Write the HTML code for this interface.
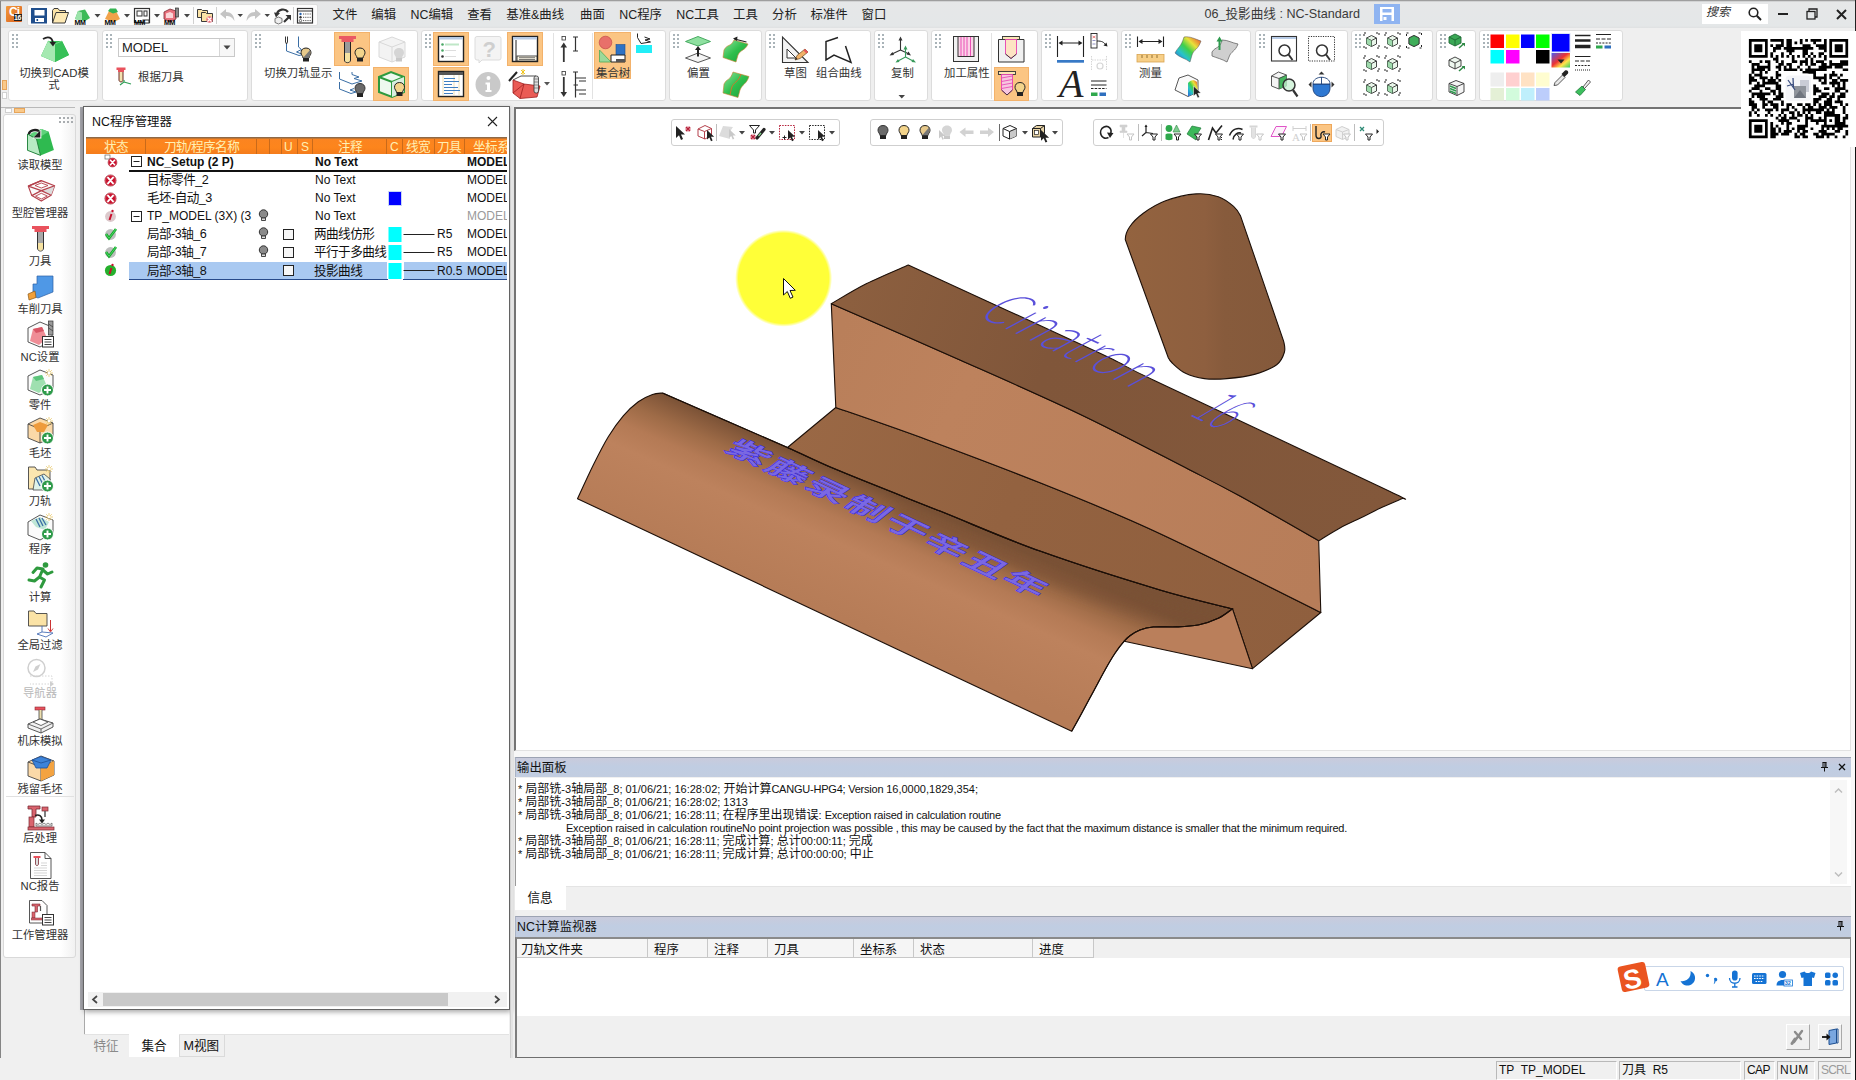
<!DOCTYPE html>
<html lang="zh-CN">
<head>
<meta charset="utf-8">
<title>06_投影曲线 : NC-Standard</title>
<style>
*{box-sizing:border-box;margin:0;padding:0}
html,body{width:1856px;height:1080px;overflow:hidden;background:#f0f0f0}
body{position:relative;font-family:"Liberation Sans","Noto Sans CJK SC",sans-serif;font-size:12px;color:#1e1e1e}
.abs{position:absolute}
.t{position:absolute;white-space:nowrap;line-height:1}
svg{position:absolute;overflow:visible}
/* title bar */
#titlebar{position:absolute;left:0;top:0;width:1856px;height:28px;background:linear-gradient(180deg,#e6e7e8 0,#e4e7e8 92%,#dfe1e2 100%)}
.menu{position:absolute;top:9px;font-size:12.4px;color:#222;white-space:nowrap;line-height:13px}
/* ribbon */
#ribbon{position:absolute;left:0;top:28px;width:1856px;height:76px;background:#efefef}
.grp{position:absolute;top:30px;height:71px;background:#fff;border:1px solid #dcdcdc;border-radius:3px}
.grip{position:absolute;width:8px;height:16px !important;background-image:radial-gradient(circle,#a9b3b8 1px,transparent 1.3px);background-size:4px 4px;margin-left:-1px}
.hl{position:absolute;background:#fbc583;border:1px solid #f3b26b}
.rl{position:absolute;font-size:11.4px;color:#333;white-space:nowrap;line-height:12px;text-align:center}
/* sidebar */
#side{position:absolute;left:3px;top:114px;width:73px;height:844px;background:linear-gradient(90deg,#fff 0,#fff 80%,#f1f1f1 100%);border:1px solid #d9d9d9;border-radius:3px}
.sl{position:absolute;left:0;width:80px;text-align:center;font-size:11.3px;color:#333;line-height:12px;white-space:nowrap}
/* NC manager */
#ncm{overflow:hidden;position:absolute;left:83px;top:106px;width:427px;height:904px;background:#fff;border:1px solid #636363;box-shadow:1px 2px 5px rgba(0,0,0,.35)}
#ncmi{position:absolute;left:2px;top:1px;width:421px;height:901px;overflow:hidden}
.row{position:absolute;left:0;height:18px;font-size:12px;line-height:18px;white-space:nowrap;color:#111}
.c{position:absolute;top:0;white-space:nowrap}
.k{font-size:12.6px;letter-spacing:-.55px}
/* viewport */
#vp{position:absolute;left:514px;top:107px;width:1337px;height:644px;background:#fff;border-top:2px solid #747474;border-left:2px solid #747474;border-right:1px solid #e2e2e2;border-bottom:1px solid #e2e2e2}
.vtb{position:absolute;top:119px;height:27px;background:#fff;border:1px solid #cfcfcf;border-radius:3px}
/* bottom panels */
.phead{position:absolute;left:515px;width:1336px;height:20px;background:linear-gradient(180deg,#c9cbdc 0,#c0cde2 45%,#c2cde0 100%);font-size:12.4px;line-height:20px;color:#111;padding-left:1px}
.out{position:absolute;left:518px;font-size:11px;color:#111;white-space:nowrap;line-height:13px}
.out b{font-weight:normal;font-size:12px}
.out i{font-style:normal;letter-spacing:-.22px}
.th{position:absolute;top:939px;height:19px;border-right:1px solid #c8c8c8;border-bottom:1px solid #c8c8c8;background:#f5f5f5;font-size:12.4px;line-height:22px;padding-left:6px;color:#111;overflow:hidden}
.sb{position:absolute;top:1061px;height:19px;border:1px solid #b9b9b9;border-right-color:#fff;border-bottom-color:#fff;font-size:12px;line-height:17px;color:#111;padding-left:2px;white-space:nowrap}
</style>
</head>
<body>
<!-- ================= TITLE BAR ================= -->
<div id="titlebar">
  <div class="abs" style="left:0;top:0;width:1856px;height:1px;background:#9e9e9e"></div><div class="abs" style="left:0;top:1px;width:1856px;height:1px;background:#d2d3d4"></div>
  <div class="abs" style="left:0;top:1px;width:1px;height:1057px;background:#858585;z-index:5"></div>
  <!-- app icon -->
  <div class="abs" style="left:6px;top:6px;width:16px;height:16px;background:linear-gradient(135deg,#f39a3c,#d9601e);border-radius:1px"></div>
  <div class="t" style="left:9px;top:6px;font-size:12px;font-weight:bold;color:#fff;letter-spacing:-1px">Ci</div>
  <div class="abs" style="left:14px;top:14px;width:8px;height:7px;background:#222"></div>
  <div class="t" style="left:14px;top:14px;font-size:7px;font-weight:bold;color:#fff;letter-spacing:-.5px">16</div>
  <!-- quick access box -->
  <div class="abs" style="left:27px;top:4px;width:291px;height:22px;background:#fdfdfd;border:1px solid #dedede;border-radius:2px"></div>
  <svg style="left:28px;top:4px" width="290" height="22" viewBox="28 4 290 22">
    <!-- save -->
    <rect x="31" y="8" width="16" height="15.5" fill="#1f4e8c"/><rect x="34.5" y="10" width="10" height="5.5" fill="#fff"/><rect x="35" y="18" width="9" height="4" fill="#fff"/><rect x="36.5" y="19" width="1.6" height="2" fill="#1f4e8c"/>
    <!-- folder -->
    <path d="M52.5 23 L52.5 10.5 L54 8.5 L58 8.5 L59.5 10.5 L65.5 10.5 L65.5 12.5" fill="#fbe3a6" stroke="#3a3a3a" stroke-width="1"/>
    <path d="M52.5 23 L56 12.5 L68.5 12.5 L65 23 Z" fill="#fde9b4" stroke="#3a3a3a" stroke-width="1"/>
    <!-- green model MM -->
    <path d="M75 19 L78 11 L85 9.5 L90 18 L85 21 Z" fill="#3dbb58"/><path d="M75 19 L78 11 L82 12.5 L82 21 Z" fill="#9be3aa"/>
    <text x="74.5" y="24.5" font-size="7" font-weight="bold" letter-spacing="-.4" fill="#000" font-family="Liberation Sans,sans-serif">MM</text>
    <path d="M94.5 14 L100.5 14 L97.5 17.5 Z" fill="#444"/>
    <!-- orange/green model -->
    <path d="M105 19 L109 11 L116 11 L120 19 L114 22 Z" fill="#f1a24a"/><path d="M108 11 L110 8.5 L116 8.5 L118 12 L113 13.5 Z" fill="#35b352"/>
    <text x="104.5" y="24.5" font-size="7" font-weight="bold" letter-spacing="-.4" fill="#000" font-family="Liberation Sans,sans-serif">MM</text>
    <path d="M124 14 L130 14 L127 17.5 Z" fill="#444"/>
    <!-- drawing grid -->
    <rect x="134.5" y="8.5" width="15" height="14" fill="#fff" stroke="#333" stroke-width="1.2"/><rect x="137" y="11" width="5" height="5" fill="none" stroke="#333"/><rect x="144" y="11" width="3" height="5" fill="none" stroke="#333"/><rect x="143" y="20" width="6" height="3" fill="#fff" stroke="#333"/>
    <text x="134" y="24.5" font-size="7" font-weight="bold" letter-spacing="-.4" fill="#000" font-family="Liberation Sans,sans-serif">MM</text>
    <path d="M154 14 L160 14 L157 17.5 Z" fill="#444"/>
    <!-- red NC -->
    <path d="M164 19 L164 12 L170 9 L176 11 L176 19 L170 22 Z" fill="#e8707c" stroke="#7a2a33" stroke-width=".8"/><path d="M166 18 L166 13.5 L170 12 L173 13.5 L173 18 Z" fill="#fbd5d8"/><rect x="175.5" y="8" width="3" height="9" fill="#888" stroke="#333" stroke-width=".7"/>
    <text x="164" y="24.5" font-size="7" font-weight="bold" letter-spacing="-.4" fill="#000" font-family="Liberation Sans,sans-serif">MM</text>
    <path d="M184 14 L190 14 L187 17.5 Z" fill="#444"/>
    <line x1="193.5" y1="7" x2="193.5" y2="24" stroke="#d0d0d0"/>
    <!-- folders x -->
    <path d="M197.500 17.500 L197.500 9.500 L201.500 9.500 L202.500 10.500 L207.500 10.500 L207.500 17.500 Z" fill="#fbe3a6" stroke="#3a3a3a"/><path d="M201.500 21.500 L201.500 12.500 L205.500 12.500 L206.500 13.500 L212.500 13.500 L212.500 21.500 Z" fill="#fbe3a6" stroke="#3a3a3a"/><circle cx="209.500" cy="19.500" r="3.200" fill="#e8707c"/><path d="M207.500 17.500 L211.500 21.500 M211.500 17.500 L207.500 21.500" stroke="#fff" stroke-width="1.200"/>
    <line x1="216.500" y1="7" x2="216.500" y2="24" stroke="#d0d0d0"/>
    <!-- undo / redo -->
    <path d="M220 14 L226 9 L226 12 C231 12 234 15 234.500 21 C232 17 230 16 226 16 L226 19 Z" fill="#c4c4c4"/>
    <path d="M237.500 14 L243 14 L240.250 17 Z" fill="#444"/>
    <path d="M261 14 L255 9 L255 12 C250 12 247 15 246.500 21 C249 17 251 16 255 16 L255 19 Z" fill="#c4c4c4"/>
    <path d="M264.500 14 L270 14 L267.250 17 Z" fill="#444"/>
    <!-- refresh -->
    <path d="M277 14 C278 9 285 8 288 12" fill="none" stroke="#333" stroke-width="2.200"/><path d="M274 12.500 L280 13 L276 17.500 Z" fill="#333"/>
    <path d="M284 22 L290 16" stroke="#333" stroke-width="2.200"/><path d="M285.500 15 L291 15 L291 20.500 Z" fill="#333"/>
    <path d="M275 18.500 L278.500 17 L282 18.500 L282 22.500 L278.500 24 L275 22.500 Z" fill="#eee" stroke="#555" stroke-width=".8"/>
    <line x1="293.500" y1="7" x2="293.500" y2="24" stroke="#d0d0d0"/>
    <!-- list -->
    <rect x="297.500" y="8.500" width="15" height="14.500" fill="#fff" stroke="#333" stroke-width="1.200"/><line x1="297.500" y1="11" x2="312.500" y2="11" stroke="#333"/>
    <circle cx="300.500" cy="14" r="1.200" fill="#2a66b0"/><circle cx="300.500" cy="17.300" r="1.200" fill="#333"/><circle cx="300.500" cy="20.600" r="1.200" fill="none" stroke="#333" stroke-width=".7"/>
    <path d="M303 14 H311 M303 17.300 H311 M303 20.600 H311" stroke="#555" stroke-width="1" stroke-dasharray="1.200 1"/>
  </svg>
  <!-- menus -->
  <div class="menu" style="left:332.5px">文件</div>
  <div class="menu" style="left:371.3px">编辑</div>
  <div class="menu" style="left:410.5px">NC编辑</div>
  <div class="menu" style="left:467.2px">查看</div>
  <div class="menu" style="left:506.3px">基准&amp;曲线</div>
  <div class="menu" style="left:580px">曲面</div>
  <div class="menu" style="left:619.3px">NC程序</div>
  <div class="menu" style="left:676.2px">NC工具</div>
  <div class="menu" style="left:733px">工具</div>
  <div class="menu" style="left:772px">分析</div>
  <div class="menu" style="left:810.5px">标准件</div>
  <div class="menu" style="left:861.5px">窗口</div>
  <div class="menu" style="left:1204.5px;top:8px;color:#3a3a3a;font-size:12.6px">06_投影曲线 : NC-Standard</div>
  <!-- blue save -->
  <div class="abs" style="left:1374px;top:4px;width:26px;height:20px;background:#8fb4f1"></div>
  <svg style="left:1380px;top:7px" width="14" height="14" viewBox="0 0 14 14"><path d="M0 0 H14 V14 H0 Z M2.500 2 V5.500 H11.500 V2 Z M2.500 8 V14 H11.500 V8 Z" fill="#fff" fill-rule="evenodd"/><rect x="3.500" y="10" width="3" height="3" fill="#fff"/></svg>
  <!-- search -->
  <div class="abs" style="left:1702px;top:4px;width:66px;height:20px;background:#fff"></div>
  <div class="t" style="left:1706px;top:6px;font-size:12px;font-style:italic;color:#333">搜索</div>
  <svg style="left:1747px;top:6px" width="16" height="16" viewBox="0 0 16 16"><circle cx="6.500" cy="6.500" r="4.300" fill="none" stroke="#222" stroke-width="1.600"/><path d="M9.800 9.800 L14 14" stroke="#222" stroke-width="2"/></svg>
  <!-- window controls -->
  <div class="abs" style="left:1778px;top:13px;width:10px;height:2px;background:#222"></div>
  <svg style="left:1806px;top:8px" width="12" height="12" viewBox="0 0 12 12"><path d="M3 3 V1 H11 V9 H9" fill="none" stroke="#222" stroke-width="1.300"/><rect x="1" y="3.500" width="8" height="7.500" fill="none" stroke="#222" stroke-width="1.300"/></svg>
  <svg style="left:1836px;top:9px" width="11" height="11" viewBox="0 0 11 11"><path d="M1 1 L10 10 M10 1 L1 10" stroke="#222" stroke-width="2"/></svg>
</div>
<!-- ================= RIBBON ================= -->
<div id="ribbon"></div>
<svg width="0" height="0" style="left:0;top:0">
  <defs>
    <linearGradient id="gGreen" x1="0" y1="0" x2="1" y2="1"><stop offset="0" stop-color="#8fe39d"/><stop offset=".5" stop-color="#2fbf4c"/><stop offset="1" stop-color="#1d9a3a"/></linearGradient>
    <linearGradient id="gRain" x1="0" y1="1" x2="1" y2="0"><stop offset="0" stop-color="#2a5bd8"/><stop offset=".3" stop-color="#28c3c9"/><stop offset=".5" stop-color="#3fd04a"/><stop offset=".7" stop-color="#e9e13a"/><stop offset="1" stop-color="#ec3b2e"/></linearGradient>
    <g id="bulbY"><path d="M0 -6 C3.600 -6 5 -3.500 5 -1.200 C5 1 3 2 3 4 L-3 4 C-3 2 -5 1 -5 -1.200 C-5 -3.500 -3.600 -6 0 -6 Z" fill="#f3d48b" stroke="#222" stroke-width="1"/><rect x="-3" y="4" width="6" height="3.500" fill="#222"/></g>
    <g id="bulbD"><path d="M0 -6 C3.600 -6 5 -3.500 5 -1.200 C5 1 3 2 3 4 L-3 4 C-3 2 -5 1 -5 -1.200 C-5 -3.500 -3.600 -6 0 -6 Z" fill="#6a6a6a" stroke="#333" stroke-width="1"/><rect x="-3" y="4" width="6" height="3.500" fill="#222"/></g>
    <g id="bulbH"><path d="M0 -6 C3.600 -6 5 -3.500 5 -1.200 C5 1 3 2 3 4 L-3 4 C-3 2 -5 1 -5 -1.200 C-5 -3.500 -3.600 -6 0 -6 Z" fill="#e7c98b" stroke="#222" stroke-width="1"/><path d="M4 -4 C5.500 -1 3 2 3 4 L-3 4 Z" fill="#777"/><rect x="-3" y="4" width="6" height="3.500" fill="#222"/></g>
    <g id="bulbG"><path d="M0 -6 C3.600 -6 5 -3.500 5 -1.200 C5 1 3 2 3 4 L-3 4 C-3 2 -5 1 -5 -1.200 C-5 -3.500 -3.600 -6 0 -6 Z" fill="#d5d5d5"/><rect x="-3" y="4" width="6" height="3.500" fill="#c8c8c8"/></g>
    <g id="funnel"><path d="M-3.500 0 H3.500 L1 3 V6 H-1 V3 Z" fill="#fff" stroke="#222" stroke-width="1"/></g>
    <g id="funnelG"><path d="M-3.500 0 H3.500 L1 3 V6 H-1 V3 Z" fill="#fff" stroke="#c4c4c4" stroke-width="1"/></g>
  </defs>
</svg>

<!-- group 1 : switch to CAD -->
<div class="grp" style="left:8px;width:90px"></div>
<div class="grip" style="left:12px;top:33px;height:14px"></div>
<svg style="left:36px;top:34px" width="36" height="30" viewBox="36 34 36 30">
  <path d="M41 56 L48 41 L62 41 L69 55 L55 62 Z" fill="#2fba4f"/>
  <path d="M41 56 L48 41 L55 44 L55 62 Z" fill="#a5e9b1"/>
  <path d="M48 41 L62 41 L69 55 L55 62 L55 44 Z" fill="#37c058"/>
  <path d="M48 41 L55 44 L62 41" fill="none" stroke="#7fdc91" stroke-width=".8"/>
  <path d="M43 39 C48 36 52 37 53 43" fill="none" stroke="#222" stroke-width="1.800"/><path d="M49.500 42 L56 42 L53 46.500 Z" fill="#222"/>
</svg>
<div class="rl" style="left:8px;top:67px;width:92px">切换到CAD模<br>式</div>
<!-- tiny left squares -->
<div class="abs" style="left:2px;top:80px;width:5px;height:10px;background:#f9c98a;border:1px solid #e7a55a"></div>
<div class="abs" style="left:2px;top:92px;width:5px;height:7px;background:#fff;border:1px solid #d0d0d0"></div>

<!-- group 2 : MODEL -->
<div class="grp" style="left:102px;width:146px"></div>
<div class="grip" style="left:106px;top:33px;height:14px"></div>
<div class="abs" style="left:118px;top:38px;width:117px;height:19px;background:#fff;border:1px solid #c9c9c9"></div>
<div class="abs" style="left:219px;top:39px;width:1px;height:17px;background:#d6d6d6"></div>
<div class="abs" style="left:220px;top:39px;width:14px;height:17px;background:#f7f7f7"></div>
<svg style="left:223px;top:45px" width="8" height="5" viewBox="0 0 8 5"><path d="M.5 .5 H7.500 L4 4.500 Z" fill="#444"/></svg>
<div class="t" style="left:122px;top:41px;font-size:13px;color:#222">MODEL</div>
<svg style="left:115px;top:67px" width="18" height="18" viewBox="115 67 18 18">
  <rect x="116.500" y="67.500" width="9" height="2.500" fill="#e9525d"/><rect x="118" y="70" width="6" height="2" fill="#e9525d"/>
  <path d="M119 72 V80 C119 82.500 123 82.500 123 80 V72" fill="#f3e2b0" stroke="#6a2b22" stroke-width="1"/>
  <path d="M124 80 L124 82 L120 85 M124 82 L131 84" fill="none" stroke="#2e9e55" stroke-width="1.200"/>
</svg>
<div class="rl" style="left:138px;top:71px">根据刀具</div>

<!-- group 3 : toggle toolpath display -->
<div class="grp" style="left:251px;width:167px"></div>
<div class="grip" style="left:255px;top:33px;height:14px"></div>
<div class="hl" style="left:334px;top:32px;width:36px;height:34px"></div>
<div class="hl" style="left:373px;top:67px;width:36px;height:34px"></div>
<svg style="left:251px;top:30px" width="167" height="71" viewBox="251 30 167 71">
  <!-- toolpath + half bulb -->
  <path d="M285.500 36.500 V42 L286.500 44 L287.500 42 V36.500" fill="none" stroke="#222" stroke-width=".9"/>
  <path d="M286.500 44 V51 L299 55.500 L303 54.500 L296.500 52 L301.500 49.500 L298.500 47 V36.500" fill="none" stroke="#3a6ea5" stroke-width="1"/>
  <use href="#bulbH" x="306" y="54"/>
  <!-- tool w/ bulb (highlighted) -->
  <rect x="339" y="36" width="17" height="3" fill="#ea5963"/><rect x="341.500" y="39" width="12" height="3" fill="#ea5963"/>
  <path d="M344.500 42 V60 C344.500 63.500 350.500 63.500 350.500 60 V42" fill="#9a9a9a" stroke="#222" stroke-width="1"/>
  <path d="M345 53 H350 V60 C350 63 345 63 345 60 Z" fill="#f6e2a1"/>
  <use href="#bulbY" x="360" y="54"/>
  <!-- gray cube w/ bulb -->
  <path d="M379 42 L392 37 L405 42 L405 57 L392 62 L379 57 Z" fill="#f3f3f3" stroke="#d9d9d9" stroke-width="1"/><path d="M379 42 L392 47 L405 42 M392 47 V62" fill="none" stroke="#d9d9d9"/>
  <use href="#bulbG" x="399" y="54"/>
  <!-- toolpath stack + dark bulb -->
  <path d="M339.500 72 V79 L352 84 L362 81 L354 78.500 L359 77 L352 74.500 V72" fill="none" stroke="#3a6ea5" stroke-width="1"/>
  <path d="M339.500 82 V89 L351 93.500 L356 92 L350 90 L354 88.500" fill="none" stroke="#3a6ea5" stroke-width="1"/>
  <use href="#bulbD" x="360" y="89.500"/>
  <!-- green cube w/ bulb (highlighted) -->
  <path d="M379 77 L391 72 L404 77 L404 92 L392 97 L379 92 Z" fill="#eef9ef" stroke="#2e9a3e" stroke-width="2"/><path d="M379 77 L392 82 L404 77 M392 82 V97" fill="none" stroke="#2e9a3e" stroke-width="2"/>
  <path d="M392 82 L404 77 L404 92 L392 97 Z" fill="#d9efe0"/>
  <use href="#bulbY" x="399.500" y="88.500"/>
</svg>
<div class="rl" style="left:264px;top:67px">切换刀轨显示</div>

<!-- group 4 -->
<div class="grp" style="left:421px;width:245px"></div>
<div class="grip" style="left:425px;top:33px;height:14px"></div>
<div class="hl" style="left:433px;top:32px;width:36px;height:34px"></div>
<div class="hl" style="left:433px;top:67px;width:36px;height:34px"></div>
<div class="hl" style="left:507px;top:32px;width:36px;height:34px"></div>
<div class="hl" style="left:594px;top:32px;width:37px;height:47px"></div>
<svg style="left:421px;top:30px" width="245" height="71" viewBox="421 30 245 71">
  <!-- list window -->
  <rect x="438.500" y="36.500" width="25" height="25" fill="#fff" stroke="#222" stroke-width="1.400"/><rect x="439" y="37" width="24" height="2.500" fill="#b7cbe6"/>
  <circle cx="442.500" cy="44.500" r="1.300" fill="#4aa866"/><rect x="445" y="43.500" width="14" height="2" fill="#bfe7c8"/>
  <circle cx="442.500" cy="50.500" r="1.300" fill="#4aa866"/><rect x="445" y="50" width="11" height="1" fill="#ddd"/>
  <circle cx="442.500" cy="56.500" r="1.300" fill="#333"/><rect x="445" y="56" width="11" height="1" fill="#ddd"/>
  <!-- help bubble -->
  <path d="M477 36.500 H499 Q501 36.500 501 38.500 V58 Q501 60 499 60 H482 L479 63 V60 H477 Q475 60 475 58 V38.500 Q475 36.500 477 36.500 Z" fill="#f4f4f4" stroke="#dcdcdc"/>
  <text x="482.500" y="57" font-size="22" font-weight="bold" fill="#cfcfcf" font-family="Liberation Sans,sans-serif">?</text>
  <!-- window layout -->
  <rect x="512.500" y="36.500" width="25" height="25" fill="#fff" stroke="#222" stroke-width="1.400"/><rect x="513" y="37" width="24" height="2.500" fill="#b7cbe6"/><line x1="516" y1="40" x2="516" y2="61" stroke="#222"/><rect x="517" y="56" width="20" height="5" fill="#f7f2e2" stroke="#222" stroke-width=".8"/><path d="M519 57.700 H535 M519 59.500 H535" stroke="#444" stroke-width=".7"/>
  <!-- table -->
  <rect x="438.500" y="71.500" width="25" height="25" fill="#fff" stroke="#222" stroke-width="1.400"/><rect x="439" y="72" width="24" height="3" fill="#555"/>
  <path d="M443 75 V96 M454 75 V96 M459 75 V96" stroke="#ead9a8" stroke-width=".8"/>
  <path d="M444 78.500 H455 M444 81.500 H459 M444 84.500 H452 M444 87.500 H458 M444 90.500 H460 M444 93.500 H453" stroke="#3f7fc1" stroke-width="1"/>
  <!-- info -->
  <circle cx="488" cy="84.500" r="12.500" fill="#c9c9c9"/><circle cx="488.500" cy="78" r="2" fill="#fff"/><path d="M485.500 82.500 H490 V90 H491.500 V92 H485.500 V90 H487 V84.500 H485.500 Z" fill="#fff"/>
  <!-- red NC model -->
  <path d="M513 80 L521 76 L536 76 L536 80" fill="none" stroke="#222" stroke-width=".8"/>
  <path d="M513 80 V93 L520 98.500 L537 97 L540 86 L524 84 Z" fill="#ea5b55" stroke="#a01f1f" stroke-width=".8"/><path d="M524 84 L520 98.500 M513 93 L524 84" stroke="#a01f1f" stroke-width=".8" fill="none"/>
  <path d="M509 81 L517 72" stroke="#222" stroke-width="2"/>
  <path d="M521 70 L525 74 M525 70 L521 74 M523 69 V75" stroke="#f0c520" stroke-width="1"/>
  <rect x="534" y="76" width="4.500" height="17" rx="2" fill="#ddd" stroke="#333" stroke-width=".8"/><path d="M534 79 H538.500 M534 82 H538.500 M534 85 H538.500 M534 88 H538.500" stroke="#555" stroke-width=".6"/>
  <path d="M544 82 H550 L547 85.500 Z" fill="#555"/>
  <line x1="553.500" y1="33" x2="553.500" y2="99" stroke="#e2e2e2"/>
  <!-- arrows up -->
  <rect x="562" y="36.500" width="3.500" height="3.500" fill="#fff" stroke="#333" stroke-width=".8"/><path d="M563.800 62 V46" stroke="#333" stroke-width="1.800"/><path d="M560.500 47.500 L563.800 42.500 L567 47.500 Z" fill="#333"/>
  <path d="M573 37 H578 M573 51 H578 M575.500 37 V51" stroke="#333" stroke-width="1.200"/>
  <!-- arrows down -->
  <rect x="562" y="71.500" width="3.500" height="3.500" fill="#fff" stroke="#333" stroke-width=".8"/><path d="M563.800 77 V93" stroke="#333" stroke-width="1.800"/><path d="M560.500 92 L563.800 97 L567 92 Z" fill="#333"/>
  <path d="M573 72 H578 M575.500 72 V97.500 M575.500 78 H586 M579 81 H586 M573.500 85 H578 M575.500 90 H586 M579 94 H586" stroke="#333" stroke-width="1.200" fill="none"/>
  <line x1="592.500" y1="33" x2="592.500" y2="99" stroke="#e2e2e2"/>
  <!-- set tree -->
  <circle cx="605.500" cy="42.500" r="6.300" fill="#e8706a" stroke="#c24a48" stroke-width=".7"/>
  <rect x="616" y="44.500" width="9" height="11" fill="#2e72c4" stroke="#1d4f91" stroke-width=".6"/>
  <path d="M599.500 50 V62 H611 Z" fill="#9bd99a" stroke="#4faa55" stroke-width=".8"/>
  <path d="M611 55 H625 V62 H611 Z" fill="#fff" stroke="#222" stroke-width="1"/><rect x="616" y="59" width="9" height="3" fill="#555"/>
  <!-- cyan icon -->
  <rect x="636" y="45" width="16" height="8" fill="#22eef7"/><path d="M637.500 33.500 V37.500 L641 43.500 L650.500 42 L645 40 L650 39 L644.500 37" fill="none" stroke="#222" stroke-width="1"/>
</svg>
<div class="rl" style="left:596px;top:67px">集合树</div>
<!-- group 5 : offset -->
<div class="grp" style="left:669px;width:93px"></div>
<div class="grip" style="left:673px;top:33px;height:14px"></div>
<svg style="left:669px;top:30px" width="93" height="71" viewBox="669 30 93 71">
  <path d="M685.500 41.500 L698 36.500 L710.500 41.500 L698 46 Z" fill="#8fe0a0" stroke="#3aa356" stroke-width=".9"/>
  <path d="M685.500 58 L698 53 L710.500 58 L698 62.500 Z" fill="#f4f4f4" stroke="#444" stroke-width=".9"/>
  <path d="M698 56.500 V49" stroke="#222" stroke-width="2"/><path d="M695 50 L698 46 L701 50 Z" fill="#222"/>
  <!-- green surface top -->
  <path d="M724 50 C727 44 731 47 734 40 L748 44 C745 51 741 49 738 55 L736 62 L723 57.500 Z" fill="url(#gGreen)" stroke="#c9832f" stroke-width=".6"/>
  <path d="M734.500 39 L746.500 42" stroke="#222" stroke-width="1.200"/><path d="M733 38.500 L737.500 36.500 L737 41 Z" fill="#222"/>
  <!-- green surface bottom -->
  <path d="M724 84 C727 78 730 81 733 72 L749 76.500 C746 85 743 83 740 90 L738 97.500 L723 93 Z" fill="url(#gGreen)" stroke="#c9832f" stroke-width=".6"/>
  <path d="M741 74 C738 83 734 81 731.500 88 L730 95" fill="none" stroke="#d0762c" stroke-width="1"/>
</svg>
<div class="rl" style="left:687px;top:67px">偏置</div>

<!-- group 6 : sketch -->
<div class="grp" style="left:765px;width:106px"></div>
<div class="grip" style="left:769px;top:33px;height:14px"></div>
<svg style="left:765px;top:30px" width="106" height="71" viewBox="765 30 106 71">
  <path d="M782.500 37 V62.500 H808 Z" fill="#f3f3f3" stroke="#333" stroke-width="1.100"/><path d="M787 49 V58 H796 Z" fill="#fff" stroke="#333" stroke-width="1"/>
  <path d="M795 60 L797 55.500 L805 49 L808 52 L800 58.500 Z" fill="#f1b169" stroke="#6b4a1e" stroke-width=".7"/><path d="M805 49 L808 52 L806.500 53.500 L803.500 50.500 Z" fill="#e9525d"/><path d="M795 60 L796 57.500 L797.500 59 Z" fill="#222"/>
  <path d="M838 37.500 L826 41.500 L826 60 L834 55 L851 62.500 L845.500 46" fill="none" stroke="#222" stroke-width="1.500"/>
</svg>
<div class="rl" style="left:784px;top:67px">草图</div>
<div class="rl" style="left:816px;top:67px">组合曲线</div>

<!-- group 7 : copy -->
<div class="grp" style="left:874px;width:54px"></div>
<div class="grip" style="left:878px;top:33px;height:14px"></div>
<svg style="left:874px;top:30px" width="54" height="71" viewBox="874 30 54 71">
  <path d="M900.500 50 V39 M900.500 50 L891 54.500 M900.500 50 L909 54" stroke="#333" stroke-width="1.100"/><path d="M898.500 40.500 L900.500 36.500 L902.500 40.500 Z M889.500 55.500 L892.500 52 L894 55 Z M911 55.500 L906.500 54.500 L908.500 51.500 Z" fill="#333"/>
  <path d="M905.500 57 V48 M905.500 57 L897 61.500 M905.500 57 L914 61.500" stroke="#3a9a5c" stroke-width="1.100"/><path d="M903.500 49.500 L905.500 45.500 L907.500 49.500 Z M895.500 62.500 L898 59 L899.500 62 Z M916 62.500 L911.500 62 L913 59 Z" fill="#3a9a5c"/>
  <path d="M898.500 95 H905 L901.800 98.500 Z" fill="#444"/>
</svg>
<div class="rl" style="left:891px;top:67px">复制</div>

<!-- group 8 : machining attributes -->
<div class="grp" style="left:931px;width:107px"></div>
<div class="grip" style="left:935px;top:33px;height:14px"></div>
<div class="hl" style="left:994px;top:67px;width:35px;height:34px"></div>
<svg style="left:931px;top:30px" width="107" height="71" viewBox="931 30 107 71">
  <rect x="953.500" y="36.500" width="25" height="25" fill="#f1f1f1" stroke="#333" stroke-width="1"/>
  <rect x="958" y="36.500" width="16" height="20" fill="#fbd3e7" stroke="#333" stroke-width="1"/>
  <path d="M961 37 V56 M964 37 V56 M967 37 V56 M970.500 37 V56" stroke="#e63fb0" stroke-width=".9"/>
  <line x1="991.500" y1="33" x2="991.500" y2="99" stroke="#e2e2e2"/>
  <!-- hole -->
  <path d="M998.500 39.500 H1004 V36.500 H1019 V39.500 H1024 V62 H998.500 Z" fill="#f0f0f0" stroke="#333" stroke-width="1"/>
  <rect x="1002.500" y="36.500" width="17" height="3" fill="#fbe6b6" stroke="#333" stroke-width=".9"/>
  <path d="M1005.500 39.500 V54 L1011 58.500 L1016.500 54 V39.500 Z" fill="#fde3c3" stroke="#e63fb0" stroke-width=".9"/><path d="M1005.500 54 L1011 58.500 L1016.500 54" fill="none" stroke="#333" stroke-width=".9"/>
  <!-- thread + bulb -->
  <rect x="998.500" y="71.500" width="17" height="3" fill="#fbe6b6" stroke="#333" stroke-width=".9"/>
  <path d="M1001.500 74.500 V90 L1007 95 L1012.500 90 V74.500 Z" fill="#f7c6df" stroke="#e63fb0" stroke-width=".9"/>
  <path d="M1001.500 78 L1012.500 76 M1001.500 81.500 L1012.500 79.500 M1001.500 85 L1012.500 83 M1001.500 88.500 L1012.500 86.500" stroke="#e63fb0" stroke-width=".8"/><path d="M1001.500 90 L1007 95 L1012.500 90" fill="none" stroke="#333" stroke-width=".9"/>
  <use href="#bulbY" x="1020" y="88.500"/>
</svg>
<div class="rl" style="left:944px;top:67px">加工属性</div>

<!-- group 9 : dimension -->
<div class="grp" style="left:1041px;width:77px"></div>
<div class="grip" style="left:1045px;top:33px;height:14px"></div>
<svg style="left:1041px;top:30px" width="77" height="71" viewBox="1041 30 77 71">
  <path d="M1057.500 36 V57 M1083.500 36 V57 M1060 43 H1081" stroke="#222" stroke-width="1.100"/><path d="M1058.500 43 L1062.500 40.500 V45.500 Z M1082.500 43 L1078.500 40.500 V45.500 Z" fill="#222"/>
  <rect x="1057" y="60" width="27" height="2.700" fill="#3779c6"/>
  <rect x="1091" y="33.500" width="6" height="14.500" fill="#fff" stroke="#222" stroke-width=".9"/><path d="M1092.500 36 L1095.500 38 M1095.500 36 L1092.500 38" stroke="#d33" stroke-width=".6"/><path d="M1092.500 40.500 H1095.500 M1092.500 44 H1095.500" stroke="#66a" stroke-width=".7"/>
  <path d="M1097 41 C1102 41 1104 42 1106 45.500" fill="none" stroke="#222" stroke-width="1"/><path d="M1107.500 46.500 L1103.500 45.500 L1106.500 42.500 Z" fill="#222"/>
  <path d="M1091.500 56 V71 M1106.500 56 V71 M1092 60 H1106" stroke="#d6d6d6" stroke-width="1" stroke-dasharray="1.500 1"/><circle cx="1100" cy="66" r="3" fill="none" stroke="#d6d6d6" stroke-width="1.200"/>
  <path d="M1091 81 H1106.500" stroke="#222" stroke-width="1"/><path d="M1091 85 H1106.500" stroke="#222" stroke-width="1"/><path d="M1091 88.500 H1106.500" stroke="#222" stroke-width="1" stroke-dasharray="2.500 1.200"/>
  <rect x="1091" y="92.500" width="6.500" height="3.500" fill="#2fa84c"/><rect x="1099.500" y="92.500" width="6.500" height="3.500" fill="#2e6fbe"/>
</svg>
<div class="t" style="left:1059px;top:67px;font-family:'Liberation Serif',serif;font-style:italic;font-size:40px;color:#222;line-height:34px">A</div>

<!-- group 10 : measure -->
<div class="grp" style="left:1121px;width:130px"></div>
<div class="grip" style="left:1125px;top:33px;height:14px"></div>
<svg style="left:1121px;top:30px" width="130" height="71" viewBox="1121 30 130 71">
  <path d="M1137.500 36.500 V47 M1163.500 36.500 V47 M1140 41.500 H1161" stroke="#222" stroke-width="1.100"/><path d="M1138.500 41.500 L1142.500 39 V44 Z M1162.500 41.500 L1158.500 39 V44 Z" fill="#222"/>
  <rect x="1137" y="54.500" width="27" height="7.500" fill="#f7cf87" stroke="#d8a450" stroke-width=".8"/><path d="M1142 55 V58 M1147 55 V58 M1152 55 V58 M1157 55 V58" stroke="#7a5a20" stroke-width=".8"/>
  <path d="M1175 53 C1178 47 1181 47 1184 37 C1190 36 1195 39 1201 41 C1198 50 1194 49 1192 55 L1190 62 C1185 58 1180 58 1175 53 Z" fill="url(#gRain)" stroke="#555" stroke-width=".5"/>
  <path d="M1212 52 C1216 46 1220 49 1222 40 C1228 40 1232 43 1238 44 C1235 52 1231 51 1229 57 L1227 62 C1222 59 1217 58 1212 56 Z" fill="#cfcfcf" stroke="#666" stroke-width=".8"/>
  <path d="M1219.500 50 V40" stroke="#2e9a4e" stroke-width="2"/><path d="M1216.500 41.500 L1219.500 36.500 L1222.500 41.500 Z" fill="#2e9a4e"/>
  <path d="M1175 90 L1179 78 L1188 75 L1198 80 L1198 92 L1188 96.500 Z" fill="#fafafa" stroke="#444" stroke-width=".9"/><path d="M1188 83 L1188 96.500 L1198 92 L1197 82 C1194 79 1190 80 1188 83 Z" fill="url(#gRain)"/>
  <path d="M1193.500 86 V96 L1196 94 L1197.700 98 L1199.500 97 L1197.800 93.300 L1201 93 Z" fill="#222" stroke="#fff" stroke-width=".5"/>
</svg>
<div class="rl" style="left:1139px;top:67px">测量</div>

<!-- group 11 : zoom -->
<div class="grp" style="left:1255px;width:93px"></div>
<div class="grip" style="left:1259px;top:33px;height:14px"></div>
<svg style="left:1255px;top:30px" width="93" height="71" viewBox="1255 30 93 71">
  <rect x="1271.500" y="36.500" width="25" height="24.500" fill="#fff" stroke="#333" stroke-width="1.100"/><rect x="1272" y="37" width="24" height="2" fill="#b7cbe6"/>
  <circle cx="1284.500" cy="50.500" r="5.500" fill="#fff" stroke="#333" stroke-width="1.500"/><path d="M1288.500 54.500 L1292.500 60" stroke="#333" stroke-width="2"/>
  <rect x="1308.500" y="36.500" width="26" height="24.500" fill="#fff" stroke="#333" stroke-width="1" stroke-dasharray="1.200 1.200"/>
  <circle cx="1322" cy="50.500" r="5.500" fill="#fff" stroke="#333" stroke-width="1.500"/><path d="M1326 54.500 L1330 60" stroke="#333" stroke-width="2"/>
  <path d="M1271.500 76 L1278.500 72 L1286.500 75 L1286.500 86 L1279 89 L1271.500 86 Z" fill="#f4f4f4" stroke="#444" stroke-width=".9"/><path d="M1279 78 L1286.500 75 L1286.500 86 L1279 89 Z" fill="#46b55e"/><path d="M1271.500 76 L1279 78.500 L1286.500 75 M1279 78.500 V89" fill="none" stroke="#444" stroke-width=".9"/>
  <circle cx="1289" cy="85" r="6" fill="rgba(200,240,210,.75)" stroke="#333" stroke-width="1.500"/><path d="M1293 90 L1297.500 96.500" stroke="#333" stroke-width="2.200"/>
  <path d="M1313 84 H1330 V88 C1330 99.500 1313 99.500 1313 88 Z" fill="#2e78d2" stroke="#1d3f77" stroke-width=".9"/><path d="M1313 84 C1313 75 1330 75 1330 84 Z" fill="#fff" stroke="#1d3f77" stroke-width=".9"/><path d="M1321.500 77 V84" stroke="#1d3f77" stroke-width=".9"/>
  <path d="M1318.500 74.500 L1321.500 71.500 L1324.500 74.500 Z M1311.500 81.500 L1308.500 84.500 L1311.500 87.500 Z M1331.500 81.500 L1334.500 84.500 L1331.500 87.500 Z" fill="#333"/>
</svg>

<!-- group 12 : views -->
<div class="grp" style="left:1351px;width:82px"></div>
<div class="grip" style="left:1355px;top:33px;height:14px"></div>
<svg style="left:1351px;top:30px" width="82" height="71" viewBox="1351 30 82 71">
  <defs>
    <g id="vcube"><path d="M-7.500 -4.500 V-7.500 H-4.500 M4.500 -7.500 H7.500 V-4.500 M7.500 4.500 V7.500 H4.500 M-4.500 7.500 H-7.500 V4.500" fill="none" stroke="#222" stroke-width="1" stroke-dasharray="2 1"/><path d="M-5 -2.500 L0 -5 L5 -2.500 V3.500 L0 6 L-5 3.500 Z" fill="#e9f6ea" stroke="#333" stroke-width=".9"/><path d="M-5 -2.500 L0 0 L5 -2.500 M0 0 V6" fill="none" stroke="#333" stroke-width=".9"/><path d="M-5 -2.500 L0 0 V6 L-5 3.500 Z" fill="#7fcf92" opacity=".7"/></g>
  </defs>
  <use href="#vcube" x="1371.500" y="40.500"/><use href="#vcube" x="1392.500" y="40.500"/><use href="#vcube" x="1414" y="40.500"/><path d="M1409 38 L1414 35.500 L1419 38 V44 L1414 46.500 L1409 44 Z" fill="#3fae5a" stroke="#333" stroke-width=".8"/>
  <use href="#vcube" x="1371.500" y="63.500"/><use href="#vcube" x="1392.500" y="63.500"/>
  <use href="#vcube" x="1371.500" y="87.500"/><use href="#vcube" x="1392.500" y="87.500"/>
</svg>

<!-- group 13 -->
<div class="grp" style="left:1436px;width:40px"></div>
<div class="grip" style="left:1440px;top:33px;height:14px"></div>
<svg style="left:1436px;top:30px" width="40" height="71" viewBox="1436 30 40 71">
  <path d="M1449 37 L1455 34 L1461 37 V43 L1455 46 L1449 43 Z" fill="#3aa855" stroke="#1f6a35" stroke-width=".9"/><path d="M1449 37 L1455 40 L1461 37 M1455 40 V46" fill="none" stroke="#1f6a35" stroke-width=".9"/><path d="M1459 48 L1464 43.500" stroke="#2e8a45" stroke-width="1.500"/><path d="M1461.500 43 H1465 V46.500 Z" fill="#2e8a45"/>
  <path d="M1449 60 L1455 57 L1461 60 V66 L1455 69 L1449 66 Z" fill="#eef7ef" stroke="#333" stroke-width=".9"/><path d="M1449 60 L1455 63 L1461 60 M1455 63 V69" fill="none" stroke="#333" stroke-width=".9"/><path d="M1459 71 L1464 66.500" stroke="#2e8a45" stroke-width="1.500"/><path d="M1461.500 66 H1465 V69.500 Z" fill="#2e8a45"/>
  <path d="M1449 83.500 L1456 80.500 L1464 83.500 V92 L1457 95.500 L1449 92 Z" fill="#f4f4f4" stroke="#333" stroke-width=".9"/><path d="M1449 83.500 L1457 86.500 L1464 83.500 M1457 86.500 V95.500" fill="none" stroke="#333" stroke-width=".9"/><path d="M1450 86 L1456 88.500 M1450 88.500 L1456 91 M1450 91 L1456 93.500" stroke="#2e9a4e" stroke-width="1.500"/>
</svg>

<!-- group 14 : colours -->
<div class="grp" style="left:1479px;width:144px"></div>
<div class="grip" style="left:1483px;top:33px;height:14px"></div>
<svg style="left:1479px;top:30px" width="144" height="71" viewBox="1479 30 144 71">
  <defs><linearGradient id="gPal" x1="0" y1="0" x2="1" y2="1"><stop offset="0" stop-color="#4a5bf0"/><stop offset=".45" stop-color="#e33"/><stop offset=".7" stop-color="#ffe64a"/><stop offset="1" stop-color="#3c6"/></linearGradient></defs>
  <rect x="1490.500" y="34.500" width="13.500" height="13.500" fill="#ff0000"/><rect x="1506" y="34.500" width="13.500" height="13.500" fill="#ffff00"/><rect x="1521" y="34.500" width="13.500" height="13.500" fill="#0000ff"/><rect x="1536" y="34.500" width="13.500" height="13.500" fill="#00ff00"/>
  <rect x="1490.500" y="50" width="13.500" height="13.500" fill="#00ffff"/><rect x="1506" y="50" width="13.500" height="13.500" fill="#ff00ff"/><rect x="1521" y="50" width="13.500" height="13.500" fill="#ffffff"/><rect x="1536" y="50" width="13.500" height="13.500" fill="#000000"/>
  <rect x="1551.500" y="33.500" width="18.500" height="18.500" fill="#0000ff" stroke="#dbe4f7" stroke-width="1"/>
  <rect x="1551.500" y="53" width="18.500" height="14.500" fill="url(#gPal)"/><path d="M1557.500 59.500 H1564.500 L1561 63.500 Z" fill="#222"/>
  <rect x="1490.500" y="72.500" width="13.500" height="14" fill="#eeeeee"/><rect x="1506" y="72.500" width="13.500" height="14" fill="#ffd0d0"/><rect x="1521" y="72.500" width="13.500" height="14" fill="#ffe2c4"/><rect x="1536" y="72.500" width="13.500" height="14" fill="#fffdd0"/>
  <rect x="1490.500" y="88" width="13.500" height="12.500" fill="#e4f0d6"/><rect x="1506" y="88" width="13.500" height="12.500" fill="#d2fbdc"/><rect x="1521" y="88" width="13.500" height="12.500" fill="#bfeffc"/><rect x="1536" y="88" width="13.500" height="12.500" fill="#bccdfb"/>
  <path d="M1575 35.500 H1590.500" stroke="#222" stroke-width="1.500"/><path d="M1575 40.500 H1590.500" stroke="#222" stroke-width="2.500"/><path d="M1575 46.500 H1590.500" stroke="#222" stroke-width="3.500"/>
  <path d="M1596 34.500 H1611" stroke="#222" stroke-width="1"/><path d="M1596 39 H1611" stroke="#222" stroke-width="1" stroke-dasharray="4 1.500"/><path d="M1596 43 H1611" stroke="#222" stroke-width="1" stroke-dasharray="2 1.200"/><rect x="1596" y="45.500" width="6.500" height="3" fill="#2fa84c"/><rect x="1604.500" y="45.500" width="6.500" height="3" fill="#2e6fbe"/>
  <path d="M1575 56.500 H1590.500" stroke="#222" stroke-width="1"/><path d="M1575 61 H1590.500" stroke="#222" stroke-width="1" stroke-dasharray="4 1.500"/><path d="M1575 65.500 H1590.500" stroke="#222" stroke-width="1" stroke-dasharray="2 1.200"/><path d="M1575 70 H1590.500" stroke="#222" stroke-width="1" stroke-dasharray="1 1"/>
  <path d="M1554 85.500 L1555 82.500 L1562.500 75 L1565 77.500 L1557.500 85 Z" fill="#e8e8e8" stroke="#333" stroke-width=".8"/><path d="M1561.500 74 L1565 70.500 C1567 69.500 1569 71.500 1568 73.500 L1564.500 77 Z" fill="#222"/>
  <path d="M1575.500 92 L1582 86 L1585.500 89.500 L1580 95.500 Z" fill="#3cbf5d" stroke="#1f7a3a" stroke-width=".8"/><path d="M1583 87 L1588.500 80 L1590.500 82 L1584.500 88.500 Z" fill="#f1f1f1" stroke="#333" stroke-width=".8"/>
</svg>
<!-- ================= SIDEBAR ================= -->
<div class="abs" style="left:5px;top:108px;width:7px;height:5px;background:#fff;border:1px solid #d0d0d0"></div>
<div class="abs" style="left:14px;top:108px;width:11px;height:5px;background:#f9c98a;border:1px solid #e7a55a"></div>
<div id="side"></div>
<div class="abs" style="left:58px;top:116px;width:16px;height:8px;background-image:radial-gradient(circle,#a9adb0 1px,transparent 1.300px);background-size:4px 4px"></div>
<div class="abs" style="left:0;top:107px;width:75px;height:1px;background:#b9b9b9"></div>
<div class="abs" style="left:6px;top:796px;width:68px;height:1px;background:#e1e1e1"></div>
<svg style="left:0;top:110px" width="80" height="850" viewBox="0 110 80 850">
  <defs>
    <g id="plus"><circle r="6" fill="#2e9a4a" stroke="#fff" stroke-width="1"/><path d="M-3.500 0 H3.500 M0 -3.500 V3.500" stroke="#fff" stroke-width="1.900"/></g>
    <g id="spark"><path d="M0 -4 V4 M-4 0 H4 M-2.800 -2.800 L2.800 2.800 M-2.800 2.800 L2.800 -2.800" stroke="#e9c86a" stroke-width=".8"/><circle r="1.300" fill="#fff"/></g>
  </defs>
  <!-- 1 读取模型 y=128..156 -->
  <path d="M27.500 134 L41.300 129 L48.700 131.800 L53.900 150 L40.500 155.400 L27.500 150.300 Z" fill="#2fba50"/>
  <path d="M27.500 134 L36.500 139 L40.500 155.400 L27.500 150.300 Z" fill="#b7ebc3"/>
  <path d="M27.500 134 L41.300 129 L48.700 131.800 L36.500 139 Z" fill="#5fd27b"/>
  <path d="M27.500 134 L36.500 139 L40.500 155.400 M27.500 134 V150.300 L40.500 155.400" fill="none" stroke="#1d7d38" stroke-width=".9"/>
  <path d="M28.800 134.200 C29.500 130.200 35 129 39 131" fill="none" stroke="#fff" stroke-width="4"/><path d="M32.300 138.500 H41.300 V129.300 Z" fill="#fff"/>
  <path d="M28.800 134.200 C29.500 130.200 35 129 39 131" fill="none" stroke="#1e1e1e" stroke-width="2.300"/><path d="M33.500 137.500 H40.300 V130.500 Z" fill="#1e1e1e"/>
  <!-- 2 型腔管理器 -->
  <path d="M28.300 186.100 L41.300 180.600 L54.600 185.700 L51.100 195.200 L41.300 201.100 L31.800 195.600 Z" fill="#fafafa" stroke="#b5414c" stroke-width="1.200" stroke-linejoin="round"/>
  <path d="M41.300 190.600 L54.600 185.700 L51.100 195.200 Z" fill="#dcdcdc"/>
  <path d="M28.300 186.100 L41.300 190.600 L54.600 185.700 M31.800 195.600 L41.300 190.600 L51.100 195.200 M28.300 186.100 L41.300 180.600" fill="none" stroke="#b5414c" stroke-width="1.200" stroke-linejoin="round"/>
  <path d="M35 185.500 L41.300 183 L48 185.500 L41.300 188 Z" fill="#fff" stroke="#b5414c" stroke-width=".9"/>
  <path d="M35.500 196.200 L41.300 193.300 L47.300 196 L41.300 199 Z" fill="#fff" stroke="#b5414c" stroke-width=".9"/>
  <!-- 3 刀具 -->
  <rect x="32" y="226" width="17" height="3" fill="#e9525d"/><rect x="34.500" y="229" width="12" height="3" fill="#e9525d"/>
  <path d="M37.500 232 V248 C37.500 252 43.500 252 43.500 248 V232" fill="#a8a8a8" stroke="#333" stroke-width="1"/><path d="M38 243 H43 V248 C43 251.500 38 251.500 38 248 Z" fill="#f6e2a1"/>
  <!-- 4 车削刀具 -->
  <path d="M33 284 H37 V276 H53 V292 L38 298 L33 296 Z" fill="#4f98e6" stroke="#2c5fa3" stroke-width=".7"/><path d="M28 294 L35 291 L36 297.500 L29 300 Z" fill="#f1a03a" stroke="#8a5a1a" stroke-width=".7"/>
  <!-- 5 NC设置 -->
  <path d="M28 328 L40 322 L52 327 V340 L40 347 L28 342 Z" fill="#fbfbfb" stroke="#444" stroke-width=".9"/><path d="M30 341 L33 329 L42 327 L47 338 L39 345 Z" fill="#ef8d96"/><path d="M33 329 L42 327 L44 331 L36 333 Z" fill="#d85565"/>
  <rect x="48.500" y="321" width="4.500" height="14" fill="#9a9a9a" stroke="#333" stroke-width=".7"/><path d="M48.500 324 L53 327 M48.500 328 L53 331" stroke="#333" stroke-width=".7"/>
  <rect x="42.500" y="336.500" width="11" height="10.500" fill="#fff" stroke="#333" stroke-width="1"/><path d="M44.500 339.500 H51.500 M44.500 342 H51.500 M44.500 344.500 H51.500" stroke="#333" stroke-width=".9"/>
  <!-- 6 零件 -->
  <path d="M28 376 L40 370 L53 375 V389 L40 395 L28 390 Z" fill="#fbfbfb" stroke="#444" stroke-width=".9"/><path d="M30 389 L33 377 L42 375 L47 386 L39 393 Z" fill="#9fe0b0"/><path d="M33 377 L42 375 L44 379 L36 381 Z" fill="#5cc47a"/>
  <use href="#spark" x="49" y="373"/><use href="#plus" x="47.500" y="390"/>
  <!-- 7 毛坯 -->
  <path d="M28 424 L40 418 L53 423 V437 L40 443 L28 438 Z" fill="#fbd9a8" stroke="#444" stroke-width=".9"/><path d="M28 424 L40 429 L53 423 M40 429 V443" fill="none" stroke="#444" stroke-width=".9"/><path d="M33 425 L40 422 L48 425 L44 432 L37 432 Z" fill="#ee9b3c"/>
  <use href="#spark" x="49" y="421"/><use href="#plus" x="47.500" y="438"/>
  <!-- 8 刀轨 -->
  <path d="M28.500 489 V467 H35 L37 470 H50 V489 Z" fill="#fbe6b0" stroke="#444" stroke-width=".9"/><path d="M33 490 L35 478 L44 474 L50 479 V490 Z" fill="#dff3ea" stroke="#444" stroke-width=".8"/><path d="M36 478 L40 486 M39 476.500 L43 484.500 M42 475.500 L46 483" stroke="#3a6ea5" stroke-width="1.300"/>
  <use href="#spark" x="49" y="469"/><use href="#plus" x="47.500" y="486"/>
  <!-- 9 程序 -->
  <path d="M28 522 L40 515 L53 520 V533 L40 540 L28 535 Z" fill="#fbfbfb" stroke="#444" stroke-width=".9"/><path d="M31 521 L40 517 L49 522 L45 530 L36 527 Z" fill="#bfe6d6"/><path d="M36 519 L40 527 M39 518 L43 526 M42 518 L46 525" stroke="#3a6ea5" stroke-width="1.300"/>
  <use href="#spark" x="49" y="517"/><use href="#plus" x="47.500" y="534"/>
  <!-- 10 计算 (runner) -->
  <circle cx="45.500" cy="565" r="2.800" fill="#2e9a3e"/>
  <path d="M43 569 L37 568 L33 572.500 M43 569 L39.500 577 L44.500 580 L41 587 M39.500 577 L34.500 581 L29 580 M43.500 570.500 L47.500 574 L52 572" fill="none" stroke="#2e9a3e" stroke-width="3" stroke-linecap="round" stroke-linejoin="round"/>
  <!-- 11 全局过滤 -->
  <path d="M28.500 626 V611 H34 L36 613.500 H47 V626 Z" fill="#fbe3a6" stroke="#444" stroke-width=".9"/><path d="M50.500 620 V631" stroke="#c33" stroke-width="1"/><path d="M48 628.500 L50.500 632 L53 628.500" fill="none" stroke="#c33" stroke-width=".9"/><path d="M42 626 V632 L37 634 L46 637 L53 633 L42 632" fill="none" stroke="#4a6fb5" stroke-width=".9"/>
  <!-- 12 导航器 (gray) -->
  <circle cx="36.500" cy="668" r="8.500" fill="#fff" stroke="#cfcfcf" stroke-width="1.500"/><path d="M33 672 L35.500 666.500 L40.500 664 L38 669.500 Z" fill="#cfcfcf"/><path d="M30 676 H52 V684 H30" fill="none" stroke="#d4d4d4" stroke-width="1" stroke-dasharray="1.500 1.500"/><path d="M50 681 L54 684 L50 687 Z" fill="#cfcfcf"/>
  <!-- 13 机床模拟 -->
  <rect x="35" y="707" width="10" height="3" fill="#e9525d" stroke="#8a2a33" stroke-width=".6"/><path d="M39 710 V720 H42 V710" fill="#eedfae" stroke="#444" stroke-width=".8"/>
  <path d="M28 724 L40 719 L53 723 V727 L41 733 L28 728 Z" fill="#f1f1f1" stroke="#444" stroke-width=".9"/><path d="M33 722 L40 719 L48 722 L41 725.500 Z" fill="#fff" stroke="#444" stroke-width=".8"/><path d="M28 724 L41 729 L53 723 M41 729 V733" fill="none" stroke="#444" stroke-width=".8"/>
  <!-- 14 残留毛坯 -->
  <path d="M28 762 L41 756 L54 761 V775 L41 781 L28 776 Z" fill="#fbd9a8" stroke="#444" stroke-width=".9"/><path d="M28 762 L41 767 L54 761 M41 767 V781" fill="none" stroke="#444" stroke-width=".9"/><path d="M41 767 L54 761 V775 L41 781 Z" fill="#f3a341"/>
  <path d="M32 760 L41 756.500 L51 760 L47 768 L36 768 Z" fill="#3d83d9" stroke="#1e4f95" stroke-width=".8"/><path d="M32 760 L41 763 L51 760" fill="none" stroke="#1e4f95" stroke-width=".8"/>
  <!-- 15 后处理 -->
  <path d="M28 806 H40 V809 H36 V817 H32 V809 H28 Z" fill="#d9646e" stroke="#7a2a33" stroke-width=".8"/><rect x="42" y="807" width="6" height="4" fill="#d9646e" stroke="#7a2a33" stroke-width=".7"/><path d="M45 811 V817" stroke="#555" stroke-width="1.500"/>
  <rect x="29" y="817" width="5" height="10" fill="#d9646e" stroke="#7a2a33" stroke-width=".7"/><rect x="28" y="827" width="26" height="3" fill="#d9646e" stroke="#7a2a33" stroke-width=".7"/><path d="M36 826 H52 V823 L50 824.500 L48 823 L46 824.500 L44 823 L42 824.500 L40 823 L38 824.500 L36 823 Z" fill="#eee" stroke="#444" stroke-width=".6"/>
  <path d="M35 815.500 C39 814 42 816 42 820" fill="none" stroke="#222" stroke-width="1.600"/><path d="M39 819.500 L45 819.500 L42 823.500 Z" fill="#222"/>
  <!-- 16 NC报告 -->
  <path d="M30.500 852.500 H45 L51 858.500 V878.500 H30.500 Z" fill="#fff" stroke="#444" stroke-width=".9"/><path d="M45 852.500 V858.500 H51" fill="none" stroke="#444" stroke-width=".9"/><rect x="33.500" y="856" width="7" height="2" fill="#e9525d"/><path d="M35.500 858 V864 C35.500 866 38.500 866 38.500 864 V858" fill="#ddd" stroke="#7a2a33" stroke-width=".8"/><path d="M34 868 H47 M34 870.500 H47 M34 873 H47 M34 875.500 H47 M41 863 H47 M41 865.500 H47" stroke="#c4c4c4" stroke-width=".7"/>
  <!-- 17 工作管理器 -->
  <path d="M29.500 900.500 H42 L47 905.500 V923 H29.500 Z" fill="#fff" stroke="#444" stroke-width=".9"/><path d="M32 904 H40 V906 H37.500 V912 H35 V906 H32 Z" fill="#d9646e" stroke="#7a2a33" stroke-width=".6"/><rect x="32" y="912" width="3" height="6" fill="#d9646e" stroke="#7a2a33" stroke-width=".5"/><rect x="31.500" y="918" width="12" height="2" fill="#d9646e" stroke="#7a2a33" stroke-width=".5"/><path d="M40.500 906 V911" stroke="#555" stroke-width="1.200"/>
  <rect x="42.500" y="914.500" width="11" height="10.500" fill="#fff" stroke="#333" stroke-width="1"/><path d="M44.500 917.500 H51.500 M44.500 920 H51.500 M44.500 922.500 H51.500" stroke="#333" stroke-width=".9"/>
</svg>
<div class="sl" style="top:159px">读取模型</div>
<div class="sl" style="top:207px">型腔管理器</div>
<div class="sl" style="top:255px">刀具</div>
<div class="sl" style="top:303px">车削刀具</div>
<div class="sl" style="top:351px">NC设置</div>
<div class="sl" style="top:399px">零件</div>
<div class="sl" style="top:447px">毛坯</div>
<div class="sl" style="top:495px">刀轨</div>
<div class="sl" style="top:543px">程序</div>
<div class="sl" style="top:591px">计算</div>
<div class="sl" style="top:639px">全局过滤</div>
<div class="sl" style="top:687px;color:#b9b9b9">导航器</div>
<div class="sl" style="top:735px">机床模拟</div>
<div class="sl" style="top:783px">残留毛坯</div>
<div class="sl" style="top:832px">后处理</div>
<div class="sl" style="top:880px">NC报告</div>
<div class="sl" style="top:929px">工作管理器</div>
<!-- ================= NC PROGRAM MANAGER ================= -->
<!-- area under the floating panel -->
<div class="abs" style="left:84px;top:1009px;width:425px;height:25px;background:#fff;border-left:1px solid #a9a9a9"></div>
<div class="abs" style="left:84px;top:1034px;width:425px;height:1px;background:#e3e3e3"></div>
<div class="abs" style="left:129px;top:1034px;width:50px;height:23px;background:#fff"></div>
<div class="abs" style="left:179px;top:1035px;width:46px;height:22px;border:1px solid #dadada;border-top:none"></div>
<div class="t" style="left:93.5px;top:1040px;font-size:12.6px;color:#8a8a8a">特征</div>
<div class="t" style="left:141.5px;top:1040px;font-size:12.6px;color:#111">集合</div>
<div class="t" style="left:183.5px;top:1040px;font-size:12.6px;color:#111">M视图</div>

<div class="abs" style="left:80px;top:107px;width:3px;height:903px;background:#a4a4aa"></div>
<div id="ncm"><div id="ncmi">
  <div class="t" style="left:6px;top:8px;font-size:12.4px;color:#111">NC程序管理器</div>
  <svg style="left:401px;top:8px" width="11" height="11" viewBox="0 0 11 11"><path d="M1 1 L10 10 M10 1 L1 10" stroke="#222" stroke-width="1.100"/></svg>
  <!-- header -->
  <div class="abs" style="left:0;top:29px;width:421px;height:17px;background:linear-gradient(180deg,#8f6a48 0,#8f6a48 6%,#fb8420 12%,#fd851c 60%,#f47c1c 100%)"></div>
  <div class="abs" style="left:0;top:30px;width:421px;height:16px;font-size:12px;line-height:19px;color:#fff0b4;white-space:nowrap;overflow:hidden">
    <span class="c k" style="left:18px">状态</span><span class="c k" style="left:78px">刀轨/程序名称</span><span class="c" style="left:198px">U</span><span class="c" style="left:215px">S</span><span class="c k" style="left:252px">注释</span><span class="c" style="left:304px">C</span><span class="c k" style="left:320px">线宽</span><span class="c k" style="left:351px">刀具</span><span class="c k" style="left:387px">坐标系</span>
  </div>
  <svg style="left:0;top:31px" width="421" height="15" viewBox="86 0 421 15"><path d="M145.500 0 V15 M256.500 0 V15 M269.500 0 V15 M281.500 0 V15 M297.500 0 V15 M312.500 0 V15 M386.500 0 V15 M402.500 0 V15 M434.500 0 V15 M464.500 0 V15" stroke="#c96a1a" stroke-width="1"/></svg>

  <!-- selected row -->
  <div class="abs" style="left:43px;top:154px;width:378px;height:18px;background:#a9c9f1;border-bottom:1px solid #274a8a"></div>
  <!-- rows (panel origin x=86,y=108) -->
  <div class="row" style="top:45px;font-weight:bold"><span class="c" style="left:61px">NC_Setup (2 P)</span><span class="c" style="left:229px">No Text</span><span class="c" style="left:381px">MODEL</span></div>
  <div class="abs" style="left:43px;top:62px;width:378px;height:2px;background:#111"></div>
  <div class="row" style="top:63px"><span class="c k" style="left:61px">目标零件_2</span><span class="c" style="left:229px">No Text</span><span class="c" style="left:381px">MODEL</span></div>
  <div class="row" style="top:81px"><span class="c k" style="left:61px">毛坯-自动_3</span><span class="c" style="left:229px">No Text</span><span class="c" style="left:381px">MODEL</span></div>
  <div class="row" style="top:99px"><span class="c" style="left:61px">TP_MODEL (3X) (3</span><span class="c" style="left:229px">No Text</span><span class="c" style="left:381px;color:#9a9a9a">MODEL</span></div>
  <div class="row" style="top:117px"><span class="c k" style="left:61px">局部-3轴_6</span><span class="c k" style="left:228px">两曲线仿形</span><span class="c" style="left:351px">R5</span><span class="c" style="left:381px">MODEL</span></div>
  <div class="row" style="top:135px"><span class="c k" style="left:61px">局部-3轴_7</span><span class="c k" style="left:228px">平行于多曲线</span><span class="c" style="left:351px">R5</span><span class="c" style="left:381px">MODEL</span></div>
  <div class="row" style="top:154px"><span class="c k" style="left:61px">局部-3轴_8</span><span class="c k" style="left:228px">投影曲线</span><span class="c" style="left:351px">R0.5</span><span class="c" style="left:381px">MODEL</span></div>
  <div class="abs" style="left:301px;top:135px;width:17px;height:36px;background:#fff"></div>
  <div class="abs" style="left:302px;top:155px;width:15px;height:17px;background:#fff"></div>
  <svg style="left:0;top:0" width="421" height="180" viewBox="86 108 421 180">
    <defs>
      <g id="stX"><circle r="5.600" fill="#c8102e" stroke="#8e0a1f" stroke-width=".6"/><circle r="5" fill="none" stroke="#e88" stroke-width=".5"/><path d="M-2.500 -2.800 L2.500 2.800 M2.500 -2.800 L-2.500 2.800" stroke="#fff" stroke-width="1.900" stroke-linecap="round"/></g>
      <g id="stOK"><circle r="5.400" fill="#bdbdbd"/><path d="M-4.500 -.5 L-1.500 3.800 L5.500 -5.500" fill="none" stroke="#16a52c" stroke-width="2.600"/><path d="M-4.500 -.5 L-1.500 3.800 L5.500 -5.500" fill="none" stroke="#4fe06a" stroke-width=".9"/></g>
      <g id="nbulb"><circle cy="-1.500" r="4.200" fill="#8a8a8a" stroke="#333" stroke-width="1"/><path d="M-2 2.500 H2 V5 H-2 Z" fill="#ddd" stroke="#333" stroke-width=".9"/></g>
      <g id="tbox"><rect x="-5" y="-5" width="10" height="10" fill="#fff" stroke="#222" stroke-width="1"/><path d="M-3 0 H3" stroke="#222" stroke-width="1"/></g>
      <g id="cbox"><rect x="-5" y="-5" width="10" height="10" fill="#f6f6f6" stroke="#222" stroke-width="1"/></g>
    </defs>
    <rect x="105" y="155" width="5" height="4" fill="#fff" stroke="#666" stroke-width=".7"/><use href="#stX" x="112.500" y="162.500" transform="translate(112.500 162.500) scale(.8) translate(-112.500 -162.500)"/>
    <use href="#stX" x="110.500" y="180.500"/>
    <use href="#stX" x="110.500" y="198.500"/>
    <circle cx="110.500" cy="216.500" r="5.400" fill="#dcc9cc"/><path d="M109.500 220 L111.500 214" stroke="#c8102e" stroke-width="2"/><circle cx="112.500" cy="211" r="1.200" fill="#c8102e"/>
    <use href="#stOK" x="110.500" y="234.500"/>
    <use href="#stOK" x="110.500" y="252.500"/>
    <circle cx="110.500" cy="270.500" r="5.600" fill="#25b02c"/><path d="M109.500 274 L111.500 268" stroke="#c8102e" stroke-width="2"/><circle cx="112.500" cy="265" r="1.200" fill="#c8102e"/>
    <use href="#tbox" x="136.500" y="161.500"/><use href="#tbox" x="136.500" y="216.500"/>
    <use href="#nbulb" x="263.500" y="215.500"/><use href="#nbulb" x="263.500" y="233.500"/><use href="#nbulb" x="263.500" y="251.500"/>
    <use href="#cbox" x="288.500" y="234.500"/><use href="#cbox" x="288.500" y="252.500"/><use href="#cbox" x="288.500" y="270.500"/>
    <rect x="388.500" y="191.500" width="13" height="14" fill="#0000ff" stroke="#c9d6f5" stroke-width="1"/>
    <rect x="388.500" y="227" width="13" height="15" fill="#00ffff"/><rect x="388.500" y="245" width="13" height="15" fill="#00ffff"/><rect x="388.500" y="263" width="13" height="16" fill="#00ffff"/>
    <path d="M403.500 234.500 H434.500 M403.500 252.500 H434.500 M403.500 270.500 H434.500" stroke="#222" stroke-width="1"/>
  </svg>
  <!-- h scrollbar -->
  <div class="abs" style="left:2px;top:884px;width:419px;height:15px;background:#f1f1f1"></div>
  <div class="abs" style="left:17px;top:885px;width:345px;height:13px;background:#c9c9c9"></div>
  <svg style="left:5px;top:887px" width="8" height="9" viewBox="0 0 8 9"><path d="M6 1 L2 4.500 L6 8" fill="none" stroke="#444" stroke-width="1.700"/></svg>
  <svg style="left:407px;top:887px" width="8" height="9" viewBox="0 0 8 9"><path d="M2 1 L6 4.500 L2 8" fill="none" stroke="#444" stroke-width="1.700"/></svg>
</div></div>
<!-- ================= VIEWPORT ================= -->
<div id="vp"></div>
<div class="abs" style="left:510px;top:108px;width:3px;height:970px;background:#e4e4e4;border-left:1px solid #cfcfcf"></div>
<svg style="left:516px;top:110px" width="1340" height="640" viewBox="516 110 1340 640">
  <defs>
    <linearGradient id="mTop" gradientUnits="userSpaceOnUse" x1="850" y1="300" x2="1400" y2="500"><stop offset="0" stop-color="#8c5f3f"/><stop offset=".35" stop-color="#80563a"/><stop offset="1" stop-color="#83583b"/></linearGradient>
    <linearGradient id="mFront" gradientUnits="userSpaceOnUse" x1="831" y1="350" x2="1320" y2="580"><stop offset="0" stop-color="#b97f5a"/><stop offset=".25" stop-color="#bd825d"/><stop offset="1" stop-color="#b77d59"/></linearGradient>
    <linearGradient id="mStep" gradientUnits="userSpaceOnUse" x1="790" y1="440" x2="1320" y2="640"><stop offset="0" stop-color="#9a6845"/><stop offset=".4" stop-color="#936240"/><stop offset="1" stop-color="#8f5f3e"/></linearGradient>
    <linearGradient id="mCyl" gradientUnits="userSpaceOnUse" x1="700" y1="409.4" x2="646.4" y2="531.1"><stop offset="0" stop-color="#7a5236"/><stop offset=".05" stop-color="#85593b"/><stop offset=".18" stop-color="#9e6b47"/><stop offset=".33" stop-color="#b47a55"/><stop offset=".5" stop-color="#bd825d"/><stop offset="1" stop-color="#b67c57"/></linearGradient>
    <linearGradient id="mCap" gradientUnits="userSpaceOnUse" x1="1125" y1="290" x2="1285" y2="290"><stop offset="0" stop-color="#93633f"/><stop offset=".5" stop-color="#8e5f3f"/><stop offset=".62" stop-color="#875b3c"/><stop offset="1" stop-color="#84593b"/></linearGradient>
    <radialGradient id="mYel"><stop offset="0" stop-color="#ffff38"/><stop offset=".93" stop-color="#ffff38"/><stop offset="1" stop-color="#ffff38" stop-opacity="0"/></radialGradient>
    <filter id="blur8" x="-20%" y="-50%" width="140%" height="200%"><feGaussianBlur stdDeviation="7"/></filter>
    <clipPath id="cylClip"><path d="M662.5 393.0 C683.3 402.1 757.9 434.5 787.5 447.5 C817.1 460.5 814.6 460.5 840.0 471.1 C865.4 481.7 906.7 497.8 940.0 511.1 C973.3 524.4 1003.3 538.0 1040.0 551.1 C1076.7 564.2 1127.9 580.4 1160.0 590.0 C1192.1 599.6 1220.4 605.7 1232.5 608.8 C1230.1 610.4 1224.0 615.6 1218.3 618.3 C1212.6 621.0 1205.2 623.6 1198.3 625.0 C1191.4 626.4 1184.2 626.6 1176.7 626.9 C1169.2 627.2 1159.4 626.5 1153.3 627.0 C1147.2 627.5 1143.9 628.5 1140.0 630.0 C1136.1 631.5 1132.6 633.9 1130.0 635.8 C1127.4 637.7 1126.7 638.3 1124.2 641.2 C1121.7 644.1 1118.2 648.5 1115.0 653.3 C1111.8 658.1 1108.6 663.6 1105.0 670.0 C1101.4 676.4 1097.2 684.5 1093.3 691.7 C1089.4 698.9 1085.3 706.7 1081.7 713.3 C1078.1 719.9 1073.4 728.3 1071.7 731.3 L577.5 498.7 C580.1 493.1 588.2 475.3 593.3 465.0 C598.4 454.7 603.3 444.9 608.3 436.7 C613.3 428.5 618.3 421.6 623.3 415.8 C628.3 410.0 633.4 405.3 638.3 401.7 C643.2 398.1 648.5 395.8 652.5 394.4 C656.5 392.9 660.8 393.2 662.5 393.0 Z"/></clipPath>
  </defs>
  <circle cx="783.6" cy="278.3" r="48.5" fill="url(#mYel)"/>
  <path d="M1125.3 239.7 C1125.2 235.5 1126.4 231.6 1129.4 227.2 C1132.4 222.8 1137.3 217.7 1143.3 213.3 C1149.3 208.9 1156.8 204.0 1165.6 200.8 C1174.4 197.6 1187.3 194.6 1196.1 193.9 C1204.9 193.2 1212.0 194.6 1218.3 196.7 C1224.5 198.8 1229.9 203.2 1233.6 206.4 C1237.3 209.6 1238.7 212.3 1240.6 216.1 L1283.6 341.1 C1284.5 345.1 1285.6 348.3 1284.4 352.2 C1283.2 356.1 1281.7 361.0 1276.7 364.7 C1271.7 368.4 1262.7 372.1 1254.4 374.4 C1246.1 376.7 1235.0 377.9 1226.7 378.6 C1218.4 379.3 1211.4 379.5 1204.4 378.6 C1197.5 377.7 1190.3 375.6 1185.0 373.0 C1179.7 370.4 1175.3 365.8 1172.5 363.3 C1169.7 360.8 1169.8 360.9 1168.3 357.8 Z" fill="url(#mCap)" stroke="#1c0f08" stroke-width="1.1"/>
  <path d="M662.5 393.0 C683.3 402.1 757.9 434.5 787.5 447.5 C817.1 460.5 814.6 460.5 840.0 471.1 C865.4 481.7 906.7 497.8 940.0 511.1 C973.3 524.4 1003.3 538.0 1040.0 551.1 C1076.7 564.2 1127.9 580.4 1160.0 590.0 C1192.1 599.6 1220.4 605.7 1232.5 608.8 C1230.1 610.4 1224.0 615.6 1218.3 618.3 C1212.6 621.0 1205.2 623.6 1198.3 625.0 C1191.4 626.4 1184.2 626.6 1176.7 626.9 C1169.2 627.2 1159.4 626.5 1153.3 627.0 C1147.2 627.5 1143.9 628.5 1140.0 630.0 C1136.1 631.5 1132.6 633.9 1130.0 635.8 C1127.4 637.7 1126.7 638.3 1124.2 641.2 C1121.7 644.1 1118.2 648.5 1115.0 653.3 C1111.8 658.1 1108.6 663.6 1105.0 670.0 C1101.4 676.4 1097.2 684.5 1093.3 691.7 C1089.4 698.9 1085.3 706.7 1081.7 713.3 C1078.1 719.9 1073.4 728.3 1071.7 731.3 L577.5 498.7 C580.1 493.1 588.2 475.3 593.3 465.0 C598.4 454.7 603.3 444.9 608.3 436.7 C613.3 428.5 618.3 421.6 623.3 415.8 C628.3 410.0 633.4 405.3 638.3 401.7 C643.2 398.1 648.5 395.8 652.5 394.4 C656.5 392.9 660.8 393.2 662.5 393.0 Z" fill="url(#mCyl)" stroke="#1c0f08" stroke-width="1.1" stroke-linejoin="round"/>
  <g clip-path="url(#cylClip)"><path d="M900.0 512.0 C910.0 516.0 938.3 527.2 960.0 536.0 C981.7 544.8 1006.7 555.7 1030.0 565.0 C1053.3 574.3 1078.3 584.5 1100.0 592.0 C1121.7 599.5 1140.8 605.3 1160.0 610.0 C1179.2 614.7 1205.8 618.3 1215.0 620.0" fill="none" stroke="#7a5136" stroke-width="15" stroke-linecap="round" opacity=".72" filter="url(#blur8)"/></g>
  <path d="M787.5 447.5 L835.8 407.5 C851.1 412.9 893.8 427.4 927.8 440.0 C961.8 452.6 1004.6 468.7 1040.0 482.8 C1075.4 496.9 1106.7 509.6 1140.0 524.5 C1173.3 539.4 1209.9 557.5 1240.0 572.2 C1270.1 586.9 1307.3 605.8 1320.8 612.5 L1252.5 668.7 L1232.5 608.8 C1220.4 605.7 1192.1 599.6 1160.0 590.0 C1127.9 580.4 1076.7 564.2 1040.0 551.1 C1003.3 538.0 973.3 524.4 940.0 511.1 C906.7 497.8 865.4 481.7 840.0 471.1 C814.6 460.5 796.2 451.4 787.5 447.5 Z" fill="url(#mStep)" stroke="#1c0f08" stroke-width="1.1" stroke-linejoin="round"/>
  <path d="M1232.5 608.8 C1230.1 610.4 1224.0 615.6 1218.3 618.3 C1212.6 621.0 1205.2 623.6 1198.3 625.0 C1191.4 626.4 1184.2 626.6 1176.7 626.9 C1169.2 627.2 1159.4 626.5 1153.3 627.0 C1147.2 627.5 1143.9 628.5 1140.0 630.0 C1136.1 631.5 1132.6 633.9 1130.0 635.8 C1127.4 637.7 1125.2 640.3 1124.2 641.2 L1252.5 668.7 Z" fill="#ba7f5b" stroke="#1c0f08" stroke-width="1.1" stroke-linejoin="round"/>
  <path d="M831.3 303.7 C852.8 313.1 918.5 341.6 960.0 360.0 C1001.5 378.4 1041.7 395.9 1080.0 414.2 C1118.3 432.5 1163.3 456.4 1190.0 470.0 C1216.7 483.6 1218.5 484.3 1240.0 496.1 C1261.5 507.9 1305.6 533.3 1318.7 540.8 L1320.8 612.5 C1307.3 605.8 1270.1 586.9 1240.0 572.2 C1209.9 557.5 1173.3 539.4 1140.0 524.5 C1106.7 509.6 1075.4 496.9 1040.0 482.8 C1004.6 468.7 961.8 452.6 927.8 440.0 C893.8 427.4 851.1 412.9 835.8 407.5 Z" fill="url(#mFront)" stroke="#1c0f08" stroke-width="1.1" stroke-linejoin="round"/>
  <path d="M908.3 265.0 C940.2 279.7 1059.2 334.1 1100.0 353.3 C1140.8 372.5 1106.6 357.8 1153.3 380.0 C1200.0 402.2 1338.4 467.0 1380.0 486.7 C1421.6 506.4 1399.0 496.4 1402.8 498.3 C1399.0 500.0 1387.0 505.1 1380.0 508.3 C1373.0 511.6 1367.7 514.5 1361.0 517.8 C1354.3 521.1 1347.0 524.2 1340.0 528.0 C1333.0 531.8 1322.2 538.7 1318.7 540.8 C1305.6 533.3 1261.5 507.9 1240.0 496.1 C1218.5 484.3 1216.7 483.6 1190.0 470.0 C1163.3 456.4 1118.3 432.5 1080.0 414.2 C1041.7 395.9 1001.5 378.4 960.0 360.0 C918.5 341.6 852.8 313.1 831.3 303.7 C837.2 300.3 853.9 289.9 866.7 283.5 C879.5 277.1 901.4 268.1 908.3 265.0 Z" fill="url(#mTop)" stroke="#1c0f08" stroke-width="1.1" stroke-linejoin="round"/>
  <path d="M662.5 393.0 C683.3 402.1 757.9 434.5 787.5 447.5 C817.1 460.5 814.6 460.5 840.0 471.1 C865.4 481.7 906.7 497.8 940.0 511.1 C973.3 524.4 1003.3 538.0 1040.0 551.1 C1076.7 564.2 1127.9 580.4 1160.0 590.0 C1192.1 599.6 1220.4 605.7 1232.5 608.8 C1230.1 610.4 1224.0 615.6 1218.3 618.3 C1212.6 621.0 1205.2 623.6 1198.3 625.0 C1191.4 626.4 1184.2 626.6 1176.7 626.9 C1169.2 627.2 1159.4 626.5 1153.3 627.0 C1147.2 627.5 1143.9 628.5 1140.0 630.0 C1136.1 631.5 1132.6 633.9 1130.0 635.8 C1127.4 637.7 1126.7 638.3 1124.2 641.2 C1121.7 644.1 1118.2 648.5 1115.0 653.3 C1111.8 658.1 1108.6 663.6 1105.0 670.0 C1101.4 676.4 1097.2 684.5 1093.3 691.7 C1089.4 698.9 1085.3 706.7 1081.7 713.3 C1078.1 719.9 1073.4 728.3 1071.7 731.3" fill="none" stroke="#1c0f08" stroke-width="1.1"/>
  <!-- engraved texts -->
  <text transform="matrix(0.93 0.439 -0.52 0.414 723 450)" font-family="Noto Sans CJK SC,sans-serif" font-weight="500" font-size="40" letter-spacing="2.5" fill="#7a68e2" stroke="#3a2ee8" stroke-width="1.6" paint-order="stroke">紫藤录制于辛丑年</text>
  <text transform="matrix(0.83 0.39 -0.93 0.71 975 314.5)" font-family="Noto Sans CJK SC,Liberation Sans,sans-serif" font-weight="100" font-style="italic" font-size="50" fill="#5a50da"><tspan x="0" y="0">Cinatron</tspan><tspan x="257" y="0" textLength="38" lengthAdjust="spacingAndGlyphs">16</tspan></text>
  <!-- mouse cursor -->
  <path d="M783.5 278.5 V295 L787.3 291.5 L790.3 298.3 L793 297.1 L790 290.5 L795.3 290.3 Z" fill="#fff" stroke="#111" stroke-width="1"/>
</svg>

<!-- floating toolbars -->
<div class="vtb" style="left:671px;width:169px"></div>
<div class="vtb" style="left:870px;width:193px"></div>
<div class="vtb" style="left:1093px;width:291px"></div>
<div class="abs" style="left:1312px;top:124px;width:20px;height:18px;background:#fbc583;border:1px solid #eea85c"></div>
<svg style="left:668px;top:115px" width="720" height="35" viewBox="668 115 720 35">
  <defs>
    <g id="cur"><path d="M0 0 V12 L3 9.300 L5 14 L7 13 L5 8.500 L9 8.500 Z" fill="#222"/></g>
    <g id="curG"><path d="M0 0 V12 L3 9.300 L5 14 L7 13 L5 8.500 L9 8.500 Z" fill="#c9c9c9"/></g>
    <g id="dd"><path d="M-3 0 H3 L0 3.500 Z" fill="#444"/></g>
    <g id="xball"><circle r="2.800" fill="#e9a3ad"/><path d="M-2 -2 L2 2 M2 -2 L-2 2" stroke="#b5203a" stroke-width="1.100"/></g>
  </defs>
  <!-- TB1 -->
  <use href="#cur" x="676" y="126"/><use href="#xball" x="688" y="129"/>
  <path d="M698 129 L705 125.500 L711.500 128.500 V135.500 L705 139 L698 136 Z" fill="#fff" stroke="#b5414c" stroke-width="1"/><path d="M698 129 L704.500 131.500 L711.500 128.500 M704.500 131.500 V139" fill="none" stroke="#b5414c" stroke-width="1"/><use href="#cur" x="707" y="130" transform="translate(707 130) scale(.8) translate(-707 -130)"/>
  <line x1="716.500" y1="124" x2="716.500" y2="141" stroke="#bdbdbd"/>
  <path d="M719 136 L723 126 L733 127 L729 133 L730 139 Z" fill="#dcdcdc"/><use href="#curG" x="729" y="129" transform="translate(729 129) scale(.75) translate(-729 -129)"/><use href="#dd" x="742" y="131"/>
  <path d="M749.500 125.500 H759.500 L755.500 130 V133 H753.500 V130 Z" fill="#fff" stroke="#222" stroke-width="1"/><use href="#xball" x="753" y="137"/><path d="M757 138 L764 129.500" stroke="#222" stroke-width="3.200" stroke-linecap="round"/><path d="M758.500 136 L761 133" stroke="#7fcf8a" stroke-width="1.300"/><use href="#dd" x="772" y="131"/>
  <rect x="779.500" y="125.500" width="15" height="14" fill="#fff" stroke="#b5203a" stroke-width="1" stroke-dasharray="1.500 1.200"/><path d="M782.500 137.500 H786.500 M784.500 135.500 V139.500" stroke="#222" stroke-width="1"/><use href="#cur" x="788" y="130" transform="translate(788 130) scale(.8) translate(-788 -130)"/><use href="#dd" x="802" y="131"/>
  <rect x="809.500" y="125.500" width="15" height="14" fill="#fff" stroke="#222" stroke-width="1" stroke-dasharray="1.500 1.200"/><use href="#cur" x="818" y="130" transform="translate(818 130) scale(.8) translate(-818 -130)"/><use href="#dd" x="832" y="131"/>
  <!-- TB2 -->
  <use href="#bulbD" x="883" y="131.500"/><use href="#bulbY" x="904" y="131.500"/><use href="#bulbH" x="925" y="131.500"/>
  <use href="#bulbG" x="947" y="131.500"/><use href="#curG" x="939" y="130" transform="translate(939 130) scale(.7) translate(-939 -130)"/>
  <path d="M959.500 132 L965.500 127.500 V130.500 H973.500 V134 H965.500 V137 Z" fill="#d2d2d2"/><path d="M994 132 L988 127.500 V130.500 H980 V134 H988 V137 Z" fill="#d2d2d2"/>
  <line x1="999.500" y1="124" x2="999.500" y2="141" stroke="#6a6a6a"/>
  <path d="M1003 128.500 L1010 125.500 L1016.500 128.500 V136 L1009.500 139 L1003 136 Z" fill="#fff" stroke="#222" stroke-width="1"/><path d="M1009.500 131.500 L1016.500 128.500 V136 L1009.500 139 Z" fill="#c9c9c9"/><path d="M1003 128.500 L1009.500 131.500 L1016.500 128.500 M1009.500 131.500 V139" fill="none" stroke="#222" stroke-width="1"/><use href="#dd" x="1025" y="131"/>
  <path d="M1032.500 128.500 L1036.500 125.500 H1044.500 V133.500 L1040.500 137 H1032.500 Z" fill="#e7d3a5" stroke="#222" stroke-width="1"/><path d="M1032.500 128.500 H1040.500 V137 M1040.500 128.500 L1044.500 125.500" fill="none" stroke="#222" stroke-width="1"/><rect x="1034.500" y="130.500" width="4" height="4" fill="#fff" stroke="#222" stroke-width=".7"/>
  <use href="#cur" x="1041" y="130" transform="translate(1041 130) scale(.9) translate(-1041 -130)"/><use href="#dd" x="1055" y="131"/>
  <!-- TB3 -->
  <path d="M1108.500 137.500 C1101 141 1097.500 130 1104 127 C1108.500 125 1112.500 129 1110.500 134" fill="none" stroke="#222" stroke-width="1.600"/><path d="M1107 132.500 L1113.500 133 L1110 138 Z" fill="#222"/>
  <path d="M1120 125 H1127 V127 H1125 V131 H1127 V132.500 H1120 V131 H1122 V127 H1120 Z M1123.500 132.500 V138" fill="#d0d0d0" stroke="#d0d0d0" stroke-width=".6"/><use href="#funnelG" x="1130.500" y="134"/>
  <line x1="1138.500" y1="124" x2="1138.500" y2="141" stroke="#bdbdbd"/>
  <path d="M1146 125.500 V132.500 L1142 136 M1146 132.500 L1153 133.500" fill="none" stroke="#222" stroke-width="1.200"/><path d="M1144.500 127 L1146 124.500 L1147.500 127 Z" fill="#222"/><use href="#funnel" x="1154" y="134"/>
  <line x1="1161.500" y1="124" x2="1161.500" y2="141" stroke="#bdbdbd"/>
  <circle cx="1169" cy="128.500" r="3.400" fill="#2ea84c"/><path d="M1173 132 L1176.500 125 L1180 132 Z" fill="#7fcc8f" stroke="#2e8a45" stroke-width=".6"/><path d="M1165.500 134.500 C1165.500 133 1172.500 133 1172.500 134.500 V139 C1172.500 140.500 1165.500 140.500 1165.500 139 Z" fill="#2ea84c"/><use href="#funnel" x="1177.500" y="134"/>
  <path d="M1187 134 L1192 126 L1201 128 L1197 134.500 L1196 140 Z" fill="#3cb85a" stroke="#1f7a3a" stroke-width=".7"/><use href="#funnel" x="1198" y="134"/>
  <path d="M1208.500 140 L1212.500 128 L1216 133 L1222 125.500" fill="none" stroke="#222" stroke-width="1.600"/><use href="#funnel" x="1219" y="134"/><path d="M1221.500 137 V141" stroke="#222" stroke-width="1" stroke-dasharray="1 1"/>
  <path d="M1229.500 135.500 C1232 129 1238 127 1242.500 129.500 M1233 139.500 C1234 134 1238 132 1241 133" fill="none" stroke="#222" stroke-width="1.500"/><use href="#funnel" x="1240" y="134"/>
  <rect x="1249.500" y="125.500" width="8" height="2" fill="#d6d6d6"/><path d="M1251.500 127.500 V137 L1253.500 139 L1255.500 137 V127.500" fill="#e2e2e2" stroke="#d0d0d0" stroke-width=".8"/><use href="#funnelG" x="1260" y="134"/>
  <path d="M1271 136.500 L1276 126.500 H1286.500 L1281.500 136.500 Z" fill="#fdf2fb" stroke="#e055c8" stroke-width="1"/><use href="#funnel" x="1282" y="134"/>
  <path d="M1293 126 V131 M1306 126 V131 M1293 128.500 H1306" stroke="#d0d0d0" stroke-width="1"/><text x="1292" y="141" font-size="11" fill="#d0d0d0" font-family="Liberation Serif,serif">A</text><use href="#funnelG" x="1303.500" y="134"/>
  <line x1="1310.500" y1="124" x2="1310.500" y2="141" stroke="#bdbdbd"/>
  <path d="M1316 126 V135 C1316 140 1322 139 1321 136 C1320 133 1323 131 1325 132" fill="none" stroke="#222" stroke-width="1.400"/><use href="#funnel" x="1326.500" y="134"/>
  <path d="M1336 129.500 L1342 126.500 L1349 129.500 V136.500 L1342.500 139.500 L1336 136.500 Z" fill="#f2f2f2" stroke="#d0d0d0" stroke-width="1"/><path d="M1336 129.500 L1342.500 132 L1349 129.500 M1342.500 132 V139.500" fill="none" stroke="#d0d0d0"/><use href="#funnelG" x="1347" y="134"/>
  <line x1="1354.500" y1="124" x2="1354.500" y2="141" stroke="#bdbdbd"/>
  <path d="M1360 127 L1364 131 M1364 127 L1360 131" stroke="#2e8a75" stroke-width="1.300"/><use href="#funnel" x="1369" y="134"/><path d="M1376.500 129 L1379 131.500 L1376.500 134 Z" fill="#222"/>
</svg>
<!-- ================= OUTPUT PANEL ================= -->
<div class="abs" style="left:514px;top:751px;width:1337px;height:6px;background:#f7f7f7"></div>
<div class="phead" style="top:757px;border-top:1px solid #9ca3b3;border-left:1px solid #aab3c4;line-height:21px">输出面板</div>
<svg style="left:1820px;top:762px" width="9" height="10" viewBox="0 0 9 10"><path d="M2.500 .5 H6.500 M3 .5 V5 M6 .5 V5 M5 .5 V5 M1 5.500 H8 M4.500 5.500 V9.500" stroke="#111" stroke-width="1" fill="none"/></svg>
<svg style="left:1838px;top:763px" width="8" height="8" viewBox="0 0 8 8"><path d="M1 1 L7 7 M7 1 L1 7" stroke="#111" stroke-width="1.300"/></svg>
<div class="abs" style="left:515px;top:778px;width:1337px;height:108px;background:#fff;border-left:1px solid #9a9a9a"></div>
<div class="out" style="top:783px">* <b>局部铣</b>-3<b>轴局部</b>_8; 01/06/21; 16:28:02; <b>开始计算</b><i>CANGU-HPG4; Version </i>16,0000,1829,354;</div>
<div class="out" style="top:796px">* <b>局部铣</b>-3<b>轴局部</b>_8; 01/06/21; 16:28:02; 1313</div>
<div class="out" style="top:809px">* <b>局部铣</b>-3<b>轴局部</b>_8; 01/06/21; 16:28:11; <b>在程序里出现错误</b>: <i>Exception raised in calculation routine</i></div>
<div class="out" style="top:822px;left:566px"><i>Exception raised in calculation routineNo point projection was possible , this may be caused by the fact that the maximum distance is smaller that the minimum required.</i></div>
<div class="out" style="top:835px">* <b>局部铣</b>-3<b>轴局部</b>_8; 01/06/21; 16:28:11; <b>完成计算</b>; <b>总计</b>00:00:11; <b>完成</b></div>
<div class="out" style="top:848px">* <b>局部铣</b>-3<b>轴局部</b>_8; 01/06/21; 16:28:11; <b>完成计算</b>; <b>总计</b>00:00:00; <b>中止</b></div>
<!-- v scroll arrows -->
<div class="abs" style="left:1830px;top:780px;width:17px;height:104px;background:#f7f7f7"></div>
<svg style="left:1834px;top:787px" width="9" height="7" viewBox="0 0 9 7"><path d="M1 5.500 L4.500 2 L8 5.500" fill="none" stroke="#bdbdbd" stroke-width="1.500"/></svg>
<svg style="left:1834px;top:871px" width="9" height="7" viewBox="0 0 9 7"><path d="M1 1.500 L4.500 5 L8 1.500" fill="none" stroke="#bdbdbd" stroke-width="1.500"/></svg>
<!-- info tab -->
<div class="abs" style="left:515px;top:886px;width:1337px;height:25px;background:#f0f0f0;border-top:1px solid #e4e4e4"></div>
<div class="abs" style="left:515px;top:886px;width:51px;height:24px;background:#fff"></div>
<div class="t" style="left:527.5px;top:892px;font-size:12.6px;color:#111">信息</div>

<!-- ================= NC CALC MONITOR ================= -->
<div class="phead" style="top:916px;height:21px;border-top:1px solid #9ca3b3;border-left:1px solid #aab3c4;line-height:20px">NC计算监视器</div>
<svg style="left:1836px;top:921px" width="9" height="10" viewBox="0 0 9 10"><path d="M2.500 .5 H6.500 M3 .5 V5 M6 .5 V5 M5 .5 V5 M1 5.500 H8 M4.500 5.500 V9.500" stroke="#111" stroke-width="1" fill="none"/></svg>
<div class="abs" style="left:515px;top:937px;width:1336px;height:79px;background:#fff;border-top:2px solid #8a8a8a;border-left:2px solid #7d7d7d"></div>
<div class="abs" style="left:517px;top:939px;width:1333px;height:19px;background:#f0f0f0"></div>
<div class="th" style="left:517px;width:131px;padding-left:4px">刀轨文件夹</div>
<div class="th" style="left:648px;width:60px">程序</div>
<div class="th" style="left:708px;width:60px">注释</div>
<div class="th" style="left:768px;width:86px">刀具</div>
<div class="th" style="left:854px;width:60px">坐标系</div>
<div class="th" style="left:914px;width:119px">状态</div>
<div class="th" style="left:1033px;width:61px">进度</div>
<div class="abs" style="left:517px;top:1016px;width:1335px;height:42px;background:#f0f0f0"></div>
<div class="abs" style="left:515px;top:1057px;width:1337px;height:1px;background:#6f6f6f"></div>
<div class="abs" style="left:515px;top:1016px;width:2px;height:42px;background:#7d7d7d"></div>
<div class="abs" style="left:1850px;top:937px;width:1px;height:121px;background:#8a8a8a"></div>

<!-- IME toolbar -->
<div class="abs" style="left:1644px;top:966px;width:200px;height:25px;background:#fff;border:1px solid #c9d6e8;border-radius:2px"></div>
<svg style="left:1614px;top:958px" width="236" height="38" viewBox="1614 958 236 38">
  <g transform="rotate(-12 1633.500 977)"><rect x="1619.500" y="964" width="28" height="26" rx="3" fill="#ea5420"/>
  <text x="1623" y="988" font-size="27" font-weight="bold" fill="#fff" font-family="Liberation Sans,sans-serif">S</text></g>
  <text x="1656" y="985.500" font-size="19" fill="#1573d4" font-family="Liberation Sans,sans-serif">A</text>
  <path d="M1690.500 971 A7.600 7.600 0 1 1 1680.500 981 A8.500 8.500 0 0 0 1690.500 971 Z" fill="#1573d4"/>
  <circle cx="1707.500" cy="975.500" r="1.700" fill="#1573d4"/><path d="M1714 978.500 a1.800 1.800 0 1 1 1.500 2.800 c0 1.500 -1 2.500 -2 3 c1 -1.500 1 -3 .5 -5.800 Z" fill="#1573d4"/>
  <rect x="1732" y="970.500" width="5.600" height="10" rx="2.800" fill="#1573d4"/><path d="M1729.500 978 C1729.500 985 1740 985 1740 978 M1734.800 983.500 V987 M1732 987 H1737.500" fill="none" stroke="#1573d4" stroke-width="1.300"/>
  <rect x="1752" y="973" width="14.500" height="11" rx="1.500" fill="#1573d4"/><path d="M1754 976 H1764.500 M1754 978.500 H1764.500 M1755.500 981.500 H1763" stroke="#fff" stroke-width="1.200" stroke-dasharray="1.600 1"/>
  <circle cx="1782.500" cy="974.500" r="3.600" fill="#1573d4"/><path d="M1776.500 985.500 C1776.500 978 1788.500 978 1788.500 985.500 Z" fill="#1573d4"/><rect x="1784" y="980" width="8.500" height="6" fill="#fff" stroke="#1573d4" stroke-width=".8"/><text x="1784.800" y="985.300" font-size="5.500" font-weight="bold" fill="#1573d4" font-family="Liberation Sans,sans-serif">32</text>
  <path d="M1800 973 L1804.500 971.500 C1806 973.500 1809.500 973.500 1811 971.500 L1815.500 973 L1814 978 L1812 977.500 V986 H1803.500 V977.500 L1801.500 978 Z" fill="#1573d4"/>
  <rect x="1825" y="972.500" width="5.500" height="5.500" rx="1.500" fill="#1573d4"/><rect x="1832.500" y="972.500" width="5.500" height="5.500" rx="2.700" fill="#1573d4"/><rect x="1825" y="980" width="5.500" height="5.500" rx="1.500" fill="#1573d4"/><rect x="1832.500" y="980" width="5.500" height="5.500" rx="1.500" fill="#1573d4"/>
</svg>
<!-- bottom-right buttons -->
<div class="abs" style="left:1786px;top:1024px;width:24px;height:26px;background:#f0f0f0;border:1px solid #fff;border-right-color:#a9a9a9;border-bottom-color:#a9a9a9"></div>
<div class="abs" style="left:1818px;top:1024px;width:24px;height:26px;background:#f0f0f0;border:1px solid #fff;border-right-color:#a9a9a9;border-bottom-color:#a9a9a9"></div>
<svg style="left:1790px;top:1028px" width="16" height="18" viewBox="0 0 16 18"><path d="M4 14 L12 3 M5 4 L11 11" stroke="#8b8b8b" stroke-width="2.400" stroke-linecap="round"/><path d="M2 15.500 L5 11" stroke="#8b8b8b" stroke-width="3" stroke-linecap="round"/></svg>
<svg style="left:1821px;top:1027px" width="20" height="20" viewBox="0 0 20 20"><path d="M8 3.500 L15.500 2 V16 L8 17.500 Z" fill="#7aa7e0" stroke="#1d4f91" stroke-width="1"/><path d="M15.500 2 H17 V16 H15.500" fill="none" stroke="#1d4f91" stroke-width="1"/><path d="M1 10 H7" stroke="#111" stroke-width="1.800"/><path d="M5.500 6.500 L9.500 10 L5.500 13.500 Z" fill="#111"/></svg>

<!-- ================= STATUS BAR ================= -->
<div class="abs" style="left:0;top:1058px;width:1856px;height:22px;background:#f0f0f0"></div>
<div class="sb" style="left:1496px;width:121px">TP&nbsp; TP_MODEL</div>
<div class="sb" style="left:1619px;width:122px">刀具&nbsp; R5</div>
<div class="sb" style="left:1744px;width:31px;letter-spacing:-.6px">CAP</div>
<div class="sb" style="left:1777px;width:38px;letter-spacing:.5px">NUM</div>
<div class="sb" style="left:1818px;width:36px;color:#9a9a9a;letter-spacing:-.8px">SCRL</div>
<!-- QR overlay -->
<div class="abs" style="left:1741px;top:31px;width:115px;height:116px;background:#fff"></div>
<svg style="left:1741px;top:31px" width="115" height="116" viewBox="1741 31 115 116">
  <path d="M1748.90 38.90h18.82v2.73h-18.82zM1770.35 38.90h13.46v2.73h-13.46zM1786.44 38.90h5.41v2.73h-5.41zM1799.84 38.90h2.73v2.73h-2.73zM1805.20 38.90h2.73v2.73h-2.73zM1810.56 38.90h10.77v2.73h-10.77zM1823.97 38.90h2.73v2.73h-2.73zM1829.33 38.90h18.82v2.73h-18.82zM1748.90 41.58h2.73v2.73h-2.73zM1764.99 41.58h2.73v2.73h-2.73zM1781.07 41.58h2.73v2.73h-2.73zM1786.44 41.58h5.41v2.73h-5.41zM1794.48 41.58h2.73v2.73h-2.73zM1799.84 41.58h2.73v2.73h-2.73zM1813.25 41.58h2.73v2.73h-2.73zM1823.97 41.58h2.73v2.73h-2.73zM1829.33 41.58h2.73v2.73h-2.73zM1845.42 41.58h2.73v2.73h-2.73zM1748.90 44.26h2.73v2.73h-2.73zM1754.26 44.26h8.09v2.73h-8.09zM1764.99 44.26h2.73v2.73h-2.73zM1770.35 44.26h2.73v2.73h-2.73zM1775.71 44.26h8.09v2.73h-8.09zM1786.44 44.26h5.41v2.73h-5.41zM1802.52 44.26h8.09v2.73h-8.09zM1815.93 44.26h10.77v2.73h-10.77zM1829.33 44.26h2.73v2.73h-2.73zM1834.69 44.26h8.09v2.73h-8.09zM1845.42 44.26h2.73v2.73h-2.73zM1748.90 46.94h2.73v2.73h-2.73zM1754.26 46.94h8.09v2.73h-8.09zM1764.99 46.94h2.73v2.73h-2.73zM1773.03 46.94h8.09v2.73h-8.09zM1783.75 46.94h29.54v2.73h-29.54zM1818.61 46.94h8.09v2.73h-8.09zM1829.33 46.94h2.73v2.73h-2.73zM1834.69 46.94h8.09v2.73h-8.09zM1845.42 46.94h2.73v2.73h-2.73zM1748.90 49.62h2.73v2.73h-2.73zM1754.26 49.62h8.09v2.73h-8.09zM1764.99 49.62h2.73v2.73h-2.73zM1773.03 49.62h2.73v2.73h-2.73zM1786.44 49.62h8.09v2.73h-8.09zM1802.52 49.62h5.41v2.73h-5.41zM1823.97 49.62h2.73v2.73h-2.73zM1829.33 49.62h2.73v2.73h-2.73zM1834.69 49.62h8.09v2.73h-8.09zM1845.42 49.62h2.73v2.73h-2.73zM1748.90 52.31h2.73v2.73h-2.73zM1764.99 52.31h2.73v2.73h-2.73zM1770.35 52.31h2.73v2.73h-2.73zM1781.07 52.31h2.73v2.73h-2.73zM1789.12 52.31h2.73v2.73h-2.73zM1802.52 52.31h5.41v2.73h-5.41zM1810.56 52.31h2.73v2.73h-2.73zM1818.61 52.31h5.41v2.73h-5.41zM1829.33 52.31h2.73v2.73h-2.73zM1845.42 52.31h2.73v2.73h-2.73zM1748.90 54.99h18.82v2.73h-18.82zM1770.35 54.99h2.73v2.73h-2.73zM1775.71 54.99h2.73v2.73h-2.73zM1781.07 54.99h2.73v2.73h-2.73zM1786.44 54.99h2.73v2.73h-2.73zM1791.80 54.99h2.73v2.73h-2.73zM1797.16 54.99h2.73v2.73h-2.73zM1802.52 54.99h2.73v2.73h-2.73zM1807.88 54.99h2.73v2.73h-2.73zM1813.25 54.99h2.73v2.73h-2.73zM1818.61 54.99h2.73v2.73h-2.73zM1823.97 54.99h2.73v2.73h-2.73zM1829.33 54.99h18.82v2.73h-18.82zM1773.03 57.67h5.41v2.73h-5.41zM1791.80 57.67h2.73v2.73h-2.73zM1805.20 57.67h2.73v2.73h-2.73zM1810.56 57.67h2.73v2.73h-2.73zM1823.97 57.67h2.73v2.73h-2.73zM1748.90 60.35h2.73v2.73h-2.73zM1759.62 60.35h2.73v2.73h-2.73zM1764.99 60.35h5.41v2.73h-5.41zM1775.71 60.35h2.73v2.73h-2.73zM1781.07 60.35h2.73v2.73h-2.73zM1791.80 60.35h5.41v2.73h-5.41zM1799.84 60.35h8.09v2.73h-8.09zM1810.56 60.35h2.73v2.73h-2.73zM1815.93 60.35h8.09v2.73h-8.09zM1829.33 60.35h2.73v2.73h-2.73zM1840.06 60.35h8.09v2.73h-8.09zM1751.58 63.03h8.09v2.73h-8.09zM1767.67 63.03h2.73v2.73h-2.73zM1778.39 63.03h5.41v2.73h-5.41zM1786.44 63.03h5.41v2.73h-5.41zM1799.84 63.03h2.73v2.73h-2.73zM1805.20 63.03h2.73v2.73h-2.73zM1810.56 63.03h5.41v2.73h-5.41zM1821.29 63.03h5.41v2.73h-5.41zM1829.33 63.03h18.82v2.73h-18.82zM1751.58 65.71h2.73v2.73h-2.73zM1756.94 65.71h13.46v2.73h-13.46zM1775.71 65.71h5.41v2.73h-5.41zM1783.75 65.71h2.73v2.73h-2.73zM1789.12 65.71h2.73v2.73h-2.73zM1797.16 65.71h2.73v2.73h-2.73zM1807.88 65.71h2.73v2.73h-2.73zM1818.61 65.71h13.46v2.73h-13.46zM1834.69 65.71h8.09v2.73h-8.09zM1751.58 68.39h13.46v2.73h-13.46zM1767.67 68.39h2.73v2.73h-2.73zM1778.39 68.39h2.73v2.73h-2.73zM1783.75 68.39h13.46v2.73h-13.46zM1799.84 68.39h2.73v2.73h-2.73zM1805.20 68.39h21.50v2.73h-21.50zM1842.74 68.39h5.41v2.73h-5.41zM1751.58 71.07h2.73v2.73h-2.73zM1759.62 71.07h2.73v2.73h-2.73zM1764.99 71.07h2.73v2.73h-2.73zM1775.71 71.07h2.73v2.73h-2.73zM1802.52 71.07h13.46v2.73h-13.46zM1832.01 71.07h2.73v2.73h-2.73zM1748.90 73.75h2.73v2.73h-2.73zM1754.26 73.75h8.09v2.73h-8.09zM1775.71 73.75h5.41v2.73h-5.41zM1813.25 73.75h2.73v2.73h-2.73zM1823.97 73.75h2.73v2.73h-2.73zM1829.33 73.75h8.09v2.73h-8.09zM1840.06 73.75h2.73v2.73h-2.73zM1748.90 76.44h5.41v2.73h-5.41zM1759.62 76.44h8.09v2.73h-8.09zM1770.35 76.44h2.73v2.73h-2.73zM1775.71 76.44h2.73v2.73h-2.73zM1813.25 76.44h13.46v2.73h-13.46zM1829.33 76.44h2.73v2.73h-2.73zM1837.38 76.44h2.73v2.73h-2.73zM1748.90 79.12h8.09v2.73h-8.09zM1762.31 79.12h2.73v2.73h-2.73zM1767.67 79.12h8.09v2.73h-8.09zM1778.39 79.12h2.73v2.73h-2.73zM1818.61 79.12h2.73v2.73h-2.73zM1823.97 79.12h2.73v2.73h-2.73zM1832.01 79.12h5.41v2.73h-5.41zM1840.06 79.12h8.09v2.73h-8.09zM1748.90 81.80h2.73v2.73h-2.73zM1756.94 81.80h2.73v2.73h-2.73zM1762.31 81.80h16.14v2.73h-16.14zM1821.29 81.80h5.41v2.73h-5.41zM1829.33 81.80h10.77v2.73h-10.77zM1842.74 81.80h2.73v2.73h-2.73zM1754.26 84.48h10.77v2.73h-10.77zM1775.71 84.48h5.41v2.73h-5.41zM1813.25 84.48h2.73v2.73h-2.73zM1832.01 84.48h2.73v2.73h-2.73zM1837.38 84.48h2.73v2.73h-2.73zM1842.74 84.48h2.73v2.73h-2.73zM1751.58 87.16h8.09v2.73h-8.09zM1764.99 87.16h5.41v2.73h-5.41zM1775.71 87.16h5.41v2.73h-5.41zM1813.25 87.16h5.41v2.73h-5.41zM1823.97 87.16h5.41v2.73h-5.41zM1834.69 87.16h10.77v2.73h-10.77zM1748.90 89.84h2.73v2.73h-2.73zM1759.62 89.84h2.73v2.73h-2.73zM1770.35 89.84h5.41v2.73h-5.41zM1778.39 89.84h2.73v2.73h-2.73zM1813.25 89.84h8.09v2.73h-8.09zM1834.69 89.84h5.41v2.73h-5.41zM1845.42 89.84h2.73v2.73h-2.73zM1751.58 92.52h18.82v2.73h-18.82zM1773.03 92.52h2.73v2.73h-2.73zM1778.39 92.52h5.41v2.73h-5.41zM1813.25 92.52h2.73v2.73h-2.73zM1821.29 92.52h8.09v2.73h-8.09zM1832.01 92.52h2.73v2.73h-2.73zM1840.06 92.52h5.41v2.73h-5.41zM1751.58 95.20h2.73v2.73h-2.73zM1756.94 95.20h8.09v2.73h-8.09zM1775.71 95.20h8.09v2.73h-8.09zM1818.61 95.20h8.09v2.73h-8.09zM1829.33 95.20h5.41v2.73h-5.41zM1837.38 95.20h8.09v2.73h-8.09zM1748.90 97.88h2.73v2.73h-2.73zM1759.62 97.88h8.09v2.73h-8.09zM1773.03 97.88h8.09v2.73h-8.09zM1813.25 97.88h8.09v2.73h-8.09zM1826.65 97.88h5.41v2.73h-5.41zM1837.38 97.88h2.73v2.73h-2.73zM1748.90 100.56h5.41v2.73h-5.41zM1762.31 100.56h2.73v2.73h-2.73zM1767.67 100.56h5.41v2.73h-5.41zM1781.07 100.56h2.73v2.73h-2.73zM1813.25 100.56h5.41v2.73h-5.41zM1823.97 100.56h8.09v2.73h-8.09zM1834.69 100.56h8.09v2.73h-8.09zM1748.90 103.25h8.09v2.73h-8.09zM1762.31 103.25h5.41v2.73h-5.41zM1770.35 103.25h8.09v2.73h-8.09zM1781.07 103.25h2.73v2.73h-2.73zM1786.44 103.25h5.41v2.73h-5.41zM1797.16 103.25h5.41v2.73h-5.41zM1805.20 103.25h5.41v2.73h-5.41zM1813.25 103.25h2.73v2.73h-2.73zM1818.61 103.25h2.73v2.73h-2.73zM1823.97 103.25h8.09v2.73h-8.09zM1840.06 103.25h2.73v2.73h-2.73zM1845.42 103.25h2.73v2.73h-2.73zM1751.58 105.93h5.41v2.73h-5.41zM1762.31 105.93h2.73v2.73h-2.73zM1773.03 105.93h5.41v2.73h-5.41zM1786.44 105.93h2.73v2.73h-2.73zM1791.80 105.93h2.73v2.73h-2.73zM1802.52 105.93h2.73v2.73h-2.73zM1807.88 105.93h5.41v2.73h-5.41zM1818.61 105.93h8.09v2.73h-8.09zM1829.33 105.93h8.09v2.73h-8.09zM1842.74 105.93h2.73v2.73h-2.73zM1751.58 108.61h2.73v2.73h-2.73zM1756.94 108.61h2.73v2.73h-2.73zM1764.99 108.61h8.09v2.73h-8.09zM1775.71 108.61h2.73v2.73h-2.73zM1781.07 108.61h8.09v2.73h-8.09zM1794.48 108.61h2.73v2.73h-2.73zM1802.52 108.61h21.50v2.73h-21.50zM1826.65 108.61h2.73v2.73h-2.73zM1832.01 108.61h2.73v2.73h-2.73zM1842.74 108.61h2.73v2.73h-2.73zM1748.90 111.29h2.73v2.73h-2.73zM1754.26 111.29h2.73v2.73h-2.73zM1767.67 111.29h2.73v2.73h-2.73zM1781.07 111.29h2.73v2.73h-2.73zM1789.12 111.29h5.41v2.73h-5.41zM1797.16 111.29h2.73v2.73h-2.73zM1802.52 111.29h2.73v2.73h-2.73zM1807.88 111.29h2.73v2.73h-2.73zM1815.93 111.29h5.41v2.73h-5.41zM1823.97 111.29h10.77v2.73h-10.77zM1842.74 111.29h2.73v2.73h-2.73zM1748.90 113.97h2.73v2.73h-2.73zM1756.94 113.97h2.73v2.73h-2.73zM1764.99 113.97h2.73v2.73h-2.73zM1770.35 113.97h2.73v2.73h-2.73zM1778.39 113.97h2.73v2.73h-2.73zM1783.75 113.97h2.73v2.73h-2.73zM1791.80 113.97h2.73v2.73h-2.73zM1797.16 113.97h5.41v2.73h-5.41zM1805.20 113.97h2.73v2.73h-2.73zM1810.56 113.97h2.73v2.73h-2.73zM1823.97 113.97h16.14v2.73h-16.14zM1845.42 113.97h2.73v2.73h-2.73zM1775.71 116.65h2.73v2.73h-2.73zM1781.07 116.65h5.41v2.73h-5.41zM1789.12 116.65h8.09v2.73h-8.09zM1805.20 116.65h8.09v2.73h-8.09zM1818.61 116.65h2.73v2.73h-2.73zM1823.97 116.65h2.73v2.73h-2.73zM1834.69 116.65h5.41v2.73h-5.41zM1842.74 116.65h5.41v2.73h-5.41zM1748.90 119.33h18.82v2.73h-18.82zM1778.39 119.33h10.77v2.73h-10.77zM1797.16 119.33h2.73v2.73h-2.73zM1805.20 119.33h2.73v2.73h-2.73zM1810.56 119.33h16.14v2.73h-16.14zM1829.33 119.33h2.73v2.73h-2.73zM1834.69 119.33h5.41v2.73h-5.41zM1842.74 119.33h2.73v2.73h-2.73zM1748.90 122.01h2.73v2.73h-2.73zM1764.99 122.01h2.73v2.73h-2.73zM1770.35 122.01h2.73v2.73h-2.73zM1781.07 122.01h2.73v2.73h-2.73zM1786.44 122.01h5.41v2.73h-5.41zM1805.20 122.01h2.73v2.73h-2.73zM1815.93 122.01h2.73v2.73h-2.73zM1823.97 122.01h2.73v2.73h-2.73zM1834.69 122.01h10.77v2.73h-10.77zM1748.90 124.69h2.73v2.73h-2.73zM1754.26 124.69h8.09v2.73h-8.09zM1764.99 124.69h2.73v2.73h-2.73zM1770.35 124.69h2.73v2.73h-2.73zM1775.71 124.69h2.73v2.73h-2.73zM1786.44 124.69h2.73v2.73h-2.73zM1797.16 124.69h10.77v2.73h-10.77zM1821.29 124.69h26.86v2.73h-26.86zM1748.90 127.38h2.73v2.73h-2.73zM1754.26 127.38h8.09v2.73h-8.09zM1764.99 127.38h2.73v2.73h-2.73zM1770.35 127.38h5.41v2.73h-5.41zM1778.39 127.38h2.73v2.73h-2.73zM1786.44 127.38h2.73v2.73h-2.73zM1791.80 127.38h2.73v2.73h-2.73zM1797.16 127.38h8.09v2.73h-8.09zM1810.56 127.38h2.73v2.73h-2.73zM1821.29 127.38h2.73v2.73h-2.73zM1826.65 127.38h2.73v2.73h-2.73zM1832.01 127.38h2.73v2.73h-2.73zM1837.38 127.38h5.41v2.73h-5.41zM1748.90 130.06h2.73v2.73h-2.73zM1754.26 130.06h8.09v2.73h-8.09zM1764.99 130.06h2.73v2.73h-2.73zM1770.35 130.06h5.41v2.73h-5.41zM1778.39 130.06h2.73v2.73h-2.73zM1783.75 130.06h8.09v2.73h-8.09zM1797.16 130.06h2.73v2.73h-2.73zM1802.52 130.06h5.41v2.73h-5.41zM1818.61 130.06h8.09v2.73h-8.09zM1834.69 130.06h5.41v2.73h-5.41zM1845.42 130.06h2.73v2.73h-2.73zM1748.90 132.74h2.73v2.73h-2.73zM1764.99 132.74h2.73v2.73h-2.73zM1770.35 132.74h8.09v2.73h-8.09zM1781.07 132.74h8.09v2.73h-8.09zM1794.48 132.74h2.73v2.73h-2.73zM1799.84 132.74h5.41v2.73h-5.41zM1813.25 132.74h5.41v2.73h-5.41zM1821.29 132.74h13.46v2.73h-13.46zM1845.42 132.74h2.73v2.73h-2.73zM1748.90 135.42h18.82v2.73h-18.82zM1770.35 135.42h5.41v2.73h-5.41zM1794.48 135.42h5.41v2.73h-5.41zM1802.52 135.42h5.41v2.73h-5.41zM1815.93 135.42h8.09v2.73h-8.09zM1826.65 135.42h2.73v2.73h-2.73zM1834.69 135.42h2.73v2.73h-2.73zM1842.74 135.42h2.73v2.73h-2.73z" fill="#000"/>
  <rect x="1784.500" y="74.500" width="27.500" height="27.500" rx="5" fill="#f4f5f8" stroke="#fff" stroke-width="2"/>
  <path d="M1794 86 H1806 V98 H1794 Z" fill="#8f949c"/><path d="M1800 80 H1809 V92 H1806 V86 H1800 Z" fill="#c9ccd6"/><path d="M1794 98 L1800 90 L1806 98 Z" fill="#6e747e"/>
  <path d="M1788 80 L1795 90 M1793 78 L1793.500 88 M1787 86 L1794 84" stroke="#3c4f80" stroke-width="1.300"/>
</svg>
<!-- window right edge -->
<div class="abs" style="left:1855px;top:0;width:1px;height:31px;background:#222"></div>
<div class="abs" style="left:1851px;top:147px;width:5px;height:933px;background:#f8f8f8;border-right:1px solid #111"></div>
</body>
</html>
